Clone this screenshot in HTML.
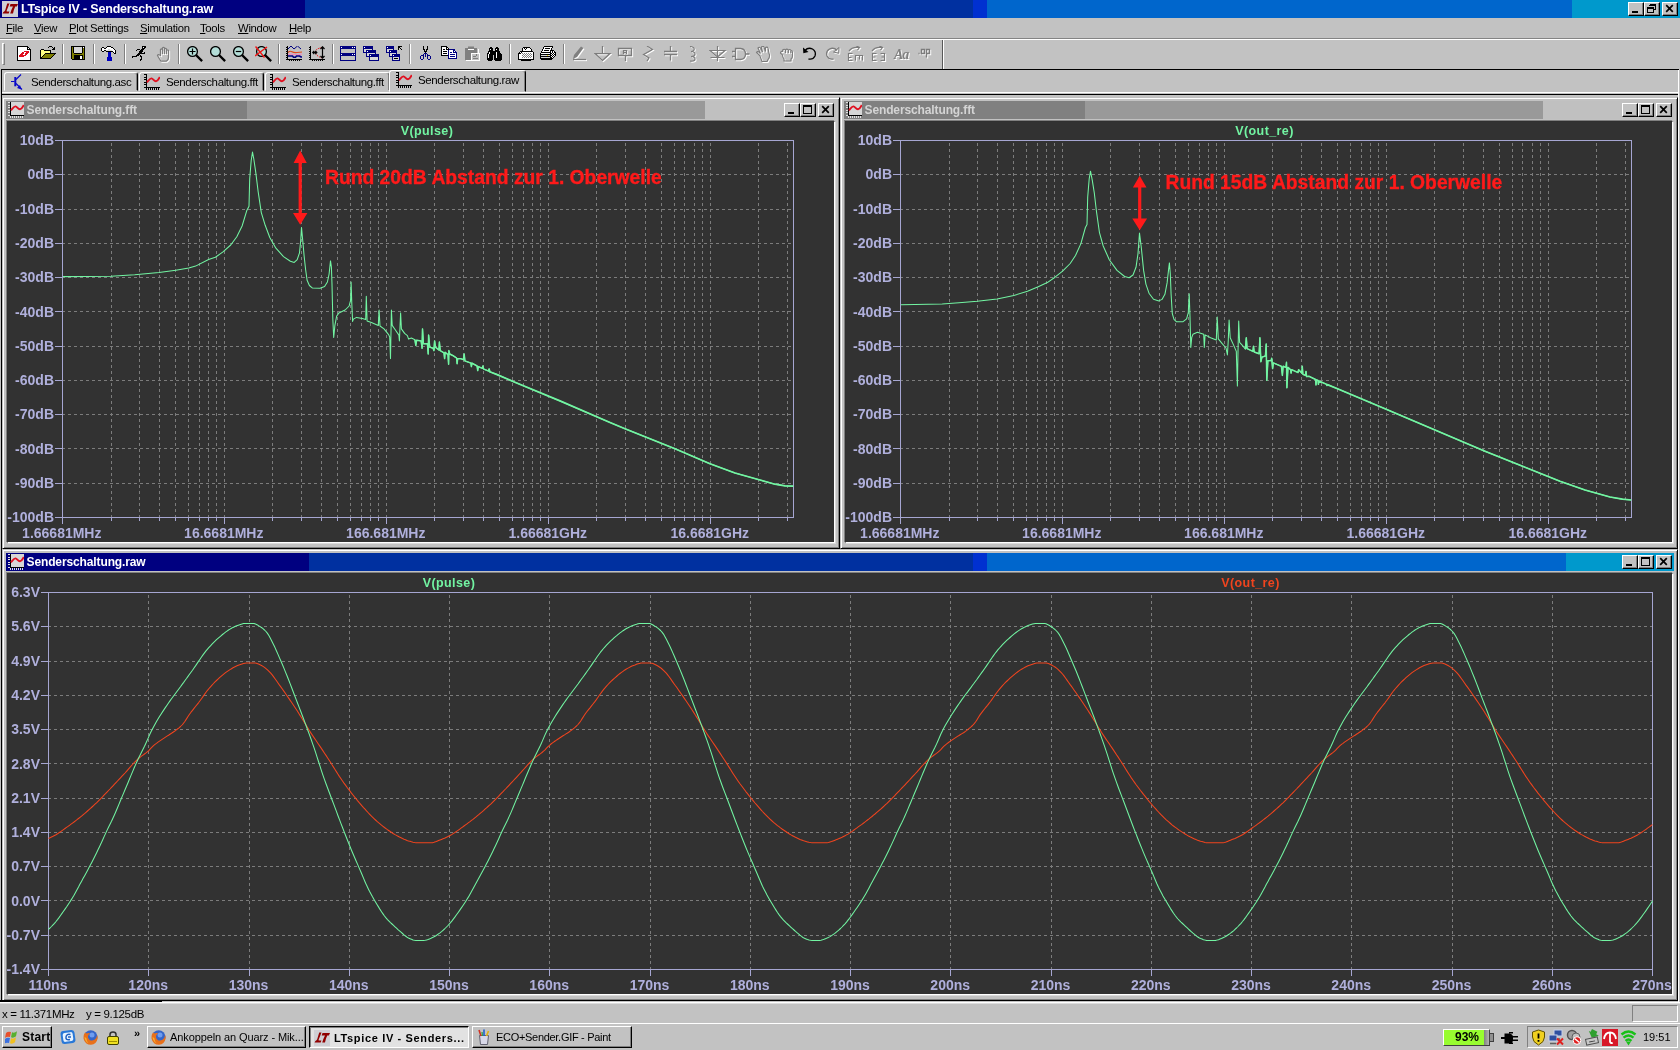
<!DOCTYPE html>
<html><head><meta charset="utf-8"><title>LTspice IV - Senderschaltung.raw</title>
<style>
*{box-sizing:border-box;margin:0;padding:0}
html,body{width:1680px;height:1050px;overflow:hidden;background:#c2c2c2;font-family:"Liberation Sans",sans-serif;font-size:11px;color:#000}
.a{position:absolute}
.t{position:absolute;white-space:nowrap;line-height:1}
.btn{position:absolute;background:#c2c2c2;border:1px solid;border-color:#fff #000 #000 #fff;box-shadow:inset -1px -1px 0 #808080}
.win{position:absolute;background:#c2c2c2;border:1px solid;border-color:#c2c2c2 #000 #000 #c2c2c2;box-shadow:inset 1px 1px 0 #fff,inset -1px -1px 0 #808080}
.cl{position:absolute;background:#323232;border:1px solid;border-color:#303030 #fff #fff #303030;box-shadow:-1px -1px 0 #808080,1px 1px 0 #dadada}
.cap{position:absolute;height:18px;color:#fff;font-weight:bold;font-size:12px}
.cap .t{top:3px}
u{text-decoration:underline}
svg{position:absolute;left:0;top:0}
svg text{font-family:"Liberation Sans",sans-serif;font-weight:bold}
</style></head><body><div id="root" style="position:absolute;left:0;top:0;width:1680px;height:1050px;will-change:transform">

<div class="a" style="left:0;top:0;width:1680px;height:18px;background:linear-gradient(90deg,#000080 0,#000080 305px,#0030a0 305px,#0030a0 973px,#0030d0 973px,#0030d0 987px,#0066cc 987px,#0066cc 1572px,#0099cc 1572px)"></div>
<svg class="a" style="left:2px;top:1px" width="16" height="16" viewBox="0 0 16 16" ><rect width="16" height="16" fill="#cfcfd4"/><path fill="#900000" d="M5.200 2.400h2.300L4.700 9.400q-.4 1.200.8 1.200h1.900l-.7 2H.6l.8-1.700q1.300-.3 1.800-1.700z"/><path fill="#900000" d="M8.500 2.900H16l-1.200 2.700h-1.600q-1.500 3.400-2.200 7H8.200q1.100-3.800 2.800-7H7.700z"/></svg>
<div class="t" style="left:21px;top:3.200px;color:#fff;font-weight:bold;font-size:12.500px;letter-spacing:-.19px" id="mt">LTspice IV - Senderschaltung.raw</div>
<div class="btn" style="left:1628px;top:2px;width:16px;height:14px"><svg class="a" style="left:-1px;top:-1px" width="16" height="14" viewBox="0 0 16 14" shape-rendering="crispEdges" ><path stroke="#000" stroke-width="2" d="M4 10h6"/></svg></div>
<div class="btn" style="left:1644px;top:2px;width:16px;height:14px"><svg class="a" style="left:-1px;top:-1px" width="16" height="14" viewBox="0 0 16 14" shape-rendering="crispEdges" ><path fill="none" stroke="#000" d="M5.5 2.5h6v5h-2M3.5 5.5h6v5h-6z"/><path stroke="#000" d="M5 3.5h7M3 6.5h7"/></svg></div>
<div class="btn" style="left:1662px;top:2px;width:16px;height:14px"><svg class="a" style="left:-1px;top:-1px" width="16" height="14" viewBox="0 0 16 14" ><path fill="none" stroke="#000" stroke-width="1.7" d="M4.2 3.2l6.6 6.6M10.8 3.2l-6.6 6.6"/></svg></div>
<div class="t" style="left:6px;top:22.500px;font-size:11.300px;letter-spacing:-.3px"><u>F</u>ile</div>
<div class="t" style="left:34px;top:22.500px;font-size:11.300px;letter-spacing:-.3px"><u>V</u>iew</div>
<div class="t" style="left:69px;top:22.500px;font-size:11.300px;letter-spacing:-.3px"><u>P</u>lot Settings</div>
<div class="t" style="left:140px;top:22.500px;font-size:11.300px;letter-spacing:-.3px"><u>S</u>imulation</div>
<div class="t" style="left:200px;top:22.500px;font-size:11.300px;letter-spacing:-.3px"><u>T</u>ools</div>
<div class="t" style="left:238px;top:22.500px;font-size:11.300px;letter-spacing:-.3px"><u>W</u>indow</div>
<div class="t" style="left:289px;top:22.500px;font-size:11.300px;letter-spacing:-.3px"><u>H</u>elp</div>
<div class="a" style="left:0;top:38px;width:1680px;height:1px;background:#848484"></div>
<div class="a" style="left:0;top:39px;width:1680px;height:1px;background:#fff"></div>
<div class="a" style="left:2px;top:43px;width:3px;height:22px;border:1px solid;border-color:#fff #808080 #808080 #fff"></div>
<div class="a" style="left:62px;top:44px;width:1px;height:20px;background:#808080"></div><div class="a" style="left:63px;top:44px;width:1px;height:20px;background:#fff"></div><div class="a" style="left:93px;top:44px;width:1px;height:20px;background:#808080"></div><div class="a" style="left:94px;top:44px;width:1px;height:20px;background:#fff"></div><div class="a" style="left:124px;top:44px;width:1px;height:20px;background:#808080"></div><div class="a" style="left:125px;top:44px;width:1px;height:20px;background:#fff"></div><div class="a" style="left:178px;top:44px;width:1px;height:20px;background:#808080"></div><div class="a" style="left:179px;top:44px;width:1px;height:20px;background:#fff"></div><div class="a" style="left:278px;top:44px;width:1px;height:20px;background:#808080"></div><div class="a" style="left:279px;top:44px;width:1px;height:20px;background:#fff"></div><div class="a" style="left:332px;top:44px;width:1px;height:20px;background:#808080"></div><div class="a" style="left:333px;top:44px;width:1px;height:20px;background:#fff"></div><div class="a" style="left:409px;top:44px;width:1px;height:20px;background:#808080"></div><div class="a" style="left:410px;top:44px;width:1px;height:20px;background:#fff"></div><div class="a" style="left:509px;top:44px;width:1px;height:20px;background:#808080"></div><div class="a" style="left:510px;top:44px;width:1px;height:20px;background:#fff"></div><div class="a" style="left:563px;top:44px;width:1px;height:20px;background:#808080"></div><div class="a" style="left:564px;top:44px;width:1px;height:20px;background:#fff"></div><svg class="a" style="left:17px;top:46px" width="14" height="15" viewBox="0 0 14 15" shape-rendering="crispEdges" ><path stroke="#000" d="M0 0.5h11M0 1.5h1M10 1.5h2M0 2.5h1M10 2.5h1M12 2.5h1M0 3.5h1M10 3.5h4M0 4.5h1M13 4.5h1M0 5.5h1M13 5.5h1M0 6.5h1M13 6.5h1M0 7.5h1M13 7.5h1M0 8.5h1M13 8.5h1M0 9.5h1M13 9.5h1M0 10.5h1M13 10.5h1M0 11.5h1M13 11.5h1M0 12.5h1M13 12.5h1M0 13.5h1M13 13.5h1M0 14.5h14"/><path stroke="#fff" d="M1 1.5h9M1 2.5h9M11 2.5h1M1 3.5h9M1 4.5h12M1 5.5h6M12 5.5h1M1 6.5h4M7 6.5h2M12 6.5h1M1 7.5h3M7 7.5h1M11 7.5h2M1 8.5h2M6 8.5h2M10 8.5h3M1 9.5h1M9 9.5h4M1 10.5h1M7 10.5h6M1 11.5h12M1 12.5h12M1 13.5h12"/><path stroke="#e01020" d="M7 5.5h5M5 6.5h2M9 6.5h3M4 7.5h3M8 7.5h3M3 8.5h3M8 8.5h2M2 9.5h7M2 10.5h5"/></svg><svg class="a" style="left:40px;top:46px" width="16" height="13" viewBox="0 0 16 13" shape-rendering="crispEdges" ><path stroke="#000" d="M9 0.5h3M8 1.5h1M12 1.5h1M14 1.5h1M13 2.5h2M1 3.5h3M12 3.5h3M0 4.5h1M4 4.5h7M0 5.5h1M10 5.5h1M0 6.5h1M10 6.5h1M0 7.5h1M5 7.5h11M0 8.5h1M4 8.5h1M14 8.5h1M0 9.5h1M3 9.5h1M13 9.5h1M0 10.5h1M2 10.5h1M12 10.5h1M0 11.5h2M11 11.5h1M0 12.5h11"/><path stroke="#ffff80" d="M1 4.5h3M1 5.5h9M1 6.5h9M1 7.5h4M1 8.5h3M1 9.5h2M1 10.5h1"/><path stroke="#808000" d="M5 8.5h9M4 9.5h9M3 10.5h9M2 11.5h9"/></svg><svg class="a" style="left:71px;top:46px" width="14" height="14" viewBox="0 0 14 14" shape-rendering="crispEdges" ><path stroke="#000" d="M0 0.5h14M0 1.5h1M2 1.5h1M11 1.5h1M13 1.5h1M0 2.5h1M2 2.5h1M11 2.5h1M13 2.5h1M0 3.5h1M2 3.5h1M11 3.5h1M13 3.5h1M0 4.5h1M2 4.5h1M11 4.5h1M13 4.5h1M0 5.5h1M2 5.5h1M11 5.5h1M13 5.5h1M0 6.5h1M2 6.5h1M11 6.5h1M13 6.5h1M0 7.5h1M3 7.5h8M13 7.5h1M0 8.5h1M13 8.5h1M0 9.5h1M3 9.5h9M13 9.5h1M0 10.5h1M3 10.5h6M11 10.5h1M13 10.5h1M0 11.5h1M3 11.5h6M11 11.5h1M13 11.5h1M0 12.5h1M3 12.5h6M11 12.5h1M13 12.5h1M1 13.5h13"/><path stroke="#808000" d="M1 1.5h1M1 2.5h1M12 2.5h1M1 3.5h1M12 3.5h1M1 4.5h1M12 4.5h1M1 5.5h1M12 5.5h1M1 6.5h1M12 6.5h1M1 7.5h2M11 7.5h2M1 8.5h12M1 9.5h2M12 9.5h1M1 10.5h2M12 10.5h1M1 11.5h2M12 11.5h1M1 12.5h2M12 12.5h1"/><path stroke="#d8d8d8" d="M3 1.5h8M3 2.5h8M3 3.5h8M3 4.5h8M3 5.5h8M3 6.5h8"/><path stroke="#fff" d="M12 1.5h1M9 10.5h2M9 11.5h2M9 12.5h2"/></svg><svg class="a" style="left:101px;top:46px" width="16" height="15" viewBox="0 0 16 15" shape-rendering="crispEdges" ><path stroke="#000" d="M6 0.5h4M1 1.5h2M5 1.5h1M10 1.5h2M0 2.5h1M3 2.5h2M12 2.5h1M0 3.5h1M13 3.5h1M0 4.5h1M3 4.5h2M14 4.5h1M1 5.5h2M5 5.5h7M14 5.5h1M12 6.5h1M14 6.5h1M13 7.5h2"/><path stroke="#fff" d="M6 1.5h4M1 2.5h2M5 2.5h7M1 3.5h6M9 3.5h4M1 4.5h2M11 4.5h3M12 5.5h2M13 6.5h1"/><path stroke="#d8d8d8" d="M7 3.5h2M5 4.5h6"/><path stroke="#0000c0" d="M7 6.5h3M7 7.5h3M7 8.5h3M7 9.5h3M7 10.5h3M6 11.5h5M6 12.5h5M6 13.5h5M6 14.5h5"/></svg><svg class="a" style="left:132px;top:46px" width="15" height="15" viewBox="0 0 15 15" shape-rendering="crispEdges" ><path stroke="#000" d="M10 0.5h4M10 1.5h1M12 1.5h2M10 2.5h3M5 3.5h3M9 3.5h3M4 4.5h1M8 4.5h3M7 5.5h4M7 6.5h3M12 6.5h1M6 7.5h7M5 8.5h3M4 9.5h3M8 9.5h1M0 10.5h5M8 10.5h2M0 11.5h1M9 11.5h1M9 12.5h1M8 13.5h2M8 14.5h1"/><path stroke="#fff" d="M11 1.5h1"/></svg><svg class="a" style="left:156px;top:46px" width="17" height="17" viewBox="0 0 17 17" ><g transform="translate(1,1)" stroke="#fff" fill="none" stroke-width="1.250"><path d="M4.5 9.5V3.5q1-1.2 2 0V2q1-1.2 2 0v1q1-1.2 2 0v1.5q1-1.2 2 0v7q0 2.500-2 3.500h-5.500q-1-1-3.500-5.500q.7-1.300 2-.5z"/><path d="M6.500 3.500v4.500M8.500 3v5M10.500 4.500v3.500"/></g><g stroke="#7c7c7c" fill="none" stroke-width="1.250"><path d="M4.5 9.5V3.5q1-1.2 2 0V2q1-1.2 2 0v1q1-1.2 2 0v1.5q1-1.2 2 0v7q0 2.500-2 3.500h-5.500q-1-1-3.500-5.500q.7-1.300 2-.5z"/><path d="M6.500 3.500v4.500M8.500 3v5M10.500 4.500v3.500"/></g></svg><svg class="a" style="left:187px;top:46px" width="16" height="16" viewBox="0 0 16 16" ><circle cx="5.5" cy="5.5" r="4.9" fill="#b4ded8" stroke="#000" stroke-width="1.3"/><path stroke="#000" stroke-width="2.3" stroke-linecap="square" d="M10 10l4.3 4.3"/><path stroke="#000" stroke-width="1.2" d="M2.500 5.500h6M5.500 2.500v6"/></svg><svg class="a" style="left:210px;top:46px" width="16" height="16" viewBox="0 0 16 16" ><circle cx="5.5" cy="5.5" r="4.9" fill="#b4ded8" stroke="#000" stroke-width="1.3"/><path stroke="#000" stroke-width="2.3" stroke-linecap="square" d="M10 10l4.3 4.3"/></svg><svg class="a" style="left:233px;top:46px" width="16" height="16" viewBox="0 0 16 16" ><circle cx="5.5" cy="5.5" r="4.9" fill="#b4ded8" stroke="#000" stroke-width="1.3"/><path stroke="#000" stroke-width="2.3" stroke-linecap="square" d="M10 10l4.3 4.3"/><path stroke="#000" stroke-width="1.200" d="M2.800 5.500h5.400"/></svg><svg class="a" style="left:255px;top:46px" width="17" height="16" viewBox="0 0 17 16" ><g transform="translate(1,0)"><circle cx="5.5" cy="5.5" r="4.9" fill="#b4ded8" stroke="#000" stroke-width="1.3"/><path stroke="#000" stroke-width="2.3" stroke-linecap="square" d="M10 10l4.3 4.3"/></g><path stroke="#f01818" stroke-width="1.500" d="M.5 .5l9 11M12 1L0 10"/></svg><svg class="a" style="left:286px;top:46px" width="16" height="16" viewBox="0 0 16 16" ><path stroke="#000" d="M1.500 0v13.500M0 13.500h16"/><path stroke="#000" d="M0 1.500h1M0 3.500h1M0 5.500h1M0 7.500h1M0 9.500h1M0 11.500h1M3.500 14v1M5.500 14v1M7.500 14v1M9.500 14v1M11.500 14v1M13.500 14v1" /><path fill="none" stroke="#000080" d="M2 3l3-3l3 3l3.500-3l3.500 3"/><path fill="none" stroke="#e04818" stroke-width="1.200" d="M2 6.500q2-2 4-.8t5 .8t5-.5"/><path fill="none" stroke="#ff80c0" d="M2 8.500q3-1 6 0t8-.5"/><path fill="none" stroke="#000080" stroke-width="1.600" d="M2 10h4.500l1 1.300h2l1-1.300h3l1.500 1h1"/></svg><svg class="a" style="left:309px;top:46px" width="16" height="16" viewBox="0 0 16 16" ><path stroke="#000" d="M1.500 0v13.500M0 13.500h16"/><path stroke="#000" d="M0 1.500h1M0 3.500h1M0 5.500h1M0 7.500h1M0 9.500h1M0 11.500h1M3.500 14v1M5.500 14v1M7.500 14v1M9.500 14v1M11.500 14v1M13.500 14v1" /><path fill="none" stroke="#e02020" stroke-dasharray="1.500 1" d="M13 1.500C4 3 4 9 13 12"/><path stroke="#000" stroke-width="1.200" fill="none" d="M13.500 1v11M11.500 3l2-2.200l2 2.200M11.500 10l2 2.200l2-2.200M4 6.500h3.500M5.300 5L3.800 6.500L5.300 8M6.300 5l1.500 1.500L6.300 8"/></svg><svg class="a" style="left:340px;top:46px" width="16" height="15" viewBox="0 0 16 15" shape-rendering="crispEdges" ><path stroke="#000080" d="M0 0.5h16M0 1.5h1M2 1.5h10M13 1.5h1M15 1.5h1M0 2.5h16M0 3.5h1M15 3.5h1M0 4.5h1M15 4.5h1M0 5.5h1M15 5.5h1M0 6.5h1M15 6.5h1M0 7.5h16M0 8.5h1M2 8.5h10M13 8.5h1M15 8.5h1M0 9.5h16M0 10.5h1M15 10.5h1M0 11.5h1M15 11.5h1M0 12.5h1M15 12.5h1M0 13.5h1M15 13.5h1M0 14.5h16"/><path stroke="#fff" d="M1 1.5h1M12 1.5h1M14 1.5h1M1 8.5h1M12 8.5h1M14 8.5h1"/></svg><svg class="a" style="left:363px;top:46px" width="16" height="15" viewBox="0 0 16 15" shape-rendering="crispEdges" ><path stroke="#000080" d="M0 0.5h10M0 1.5h1M2 1.5h8M0 2.5h10M0 3.5h1M9 3.5h1M0 4.5h1M3 4.5h10M0 5.5h1M3 5.5h1M5 5.5h8M0 6.5h13M3 7.5h1M12 7.5h1M3 8.5h1M6 8.5h10M3 9.5h1M6 9.5h1M8 9.5h8M3 10.5h13M6 11.5h1M15 11.5h1M6 12.5h1M15 12.5h1M6 13.5h1M15 13.5h1M6 14.5h10"/><path stroke="#fff" d="M1 1.5h1M4 5.5h1M7 9.5h1"/><path stroke="#d8d8d8" d="M1 3.5h8M1 4.5h2M1 5.5h2M4 7.5h8M4 8.5h2M4 9.5h2M7 11.5h8M7 12.5h8M7 13.5h8"/></svg><svg class="a" style="left:386px;top:46px" width="16" height="15" viewBox="0 0 16 15" shape-rendering="crispEdges" ><path stroke="#000080" d="M0 0.5h8M0 1.5h1M2 1.5h6M0 2.5h8M0 3.5h1M7 3.5h1M0 4.5h1M3 4.5h8M0 5.5h1M3 5.5h1M5 5.5h6M0 6.5h11M3 7.5h1M10 7.5h1M3 8.5h1M6 8.5h8M3 9.5h1M6 9.5h1M8 9.5h6M3 10.5h11M6 11.5h1M13 11.5h1M6 12.5h1M13 12.5h1M6 13.5h1M13 13.5h1M6 14.5h8"/><path stroke="#000" d="M12 0.5h4M12 1.5h2M12 2.5h1M14 2.5h1M12 3.5h1M15 3.5h1M8 12.5h4"/><path stroke="#fff" d="M1 1.5h1M4 5.5h1M7 9.5h1"/><path stroke="#d8d8d8" d="M1 3.5h6M1 4.5h2M1 5.5h2M4 7.5h6M4 8.5h2M4 9.5h2M7 11.5h6M7 12.5h1M12 12.5h1M7 13.5h6"/></svg><svg class="a" style="left:420px;top:46px" width="11" height="14" viewBox="0 0 11 14" shape-rendering="crispEdges" ><path stroke="#000" d="M3 0.5h1M7 0.5h1M3 1.5h1M7 1.5h1M3 2.5h1M7 2.5h1M3 3.5h2M6 3.5h2M4 4.5h1M6 4.5h1M4 5.5h3M5 6.5h1"/><path stroke="#000080" d="M4 7.5h3M3 8.5h1M5 8.5h1M7 8.5h1M1 9.5h3M5 9.5h1M7 9.5h3M0 10.5h1M3 10.5h1M5 10.5h1M7 10.5h1M10 10.5h1M0 11.5h1M3 11.5h1M7 11.5h1M10 11.5h1M0 12.5h1M3 12.5h1M7 12.5h1M10 12.5h1M1 13.5h2M8 13.5h2"/></svg><svg class="a" style="left:441px;top:46px" width="16" height="13" viewBox="0 0 16 13" shape-rendering="crispEdges" ><path stroke="#000" d="M0 0.5h6M0 1.5h1M5 1.5h2M0 2.5h1M5 2.5h1M7 2.5h1M0 3.5h1M2 3.5h2M5 3.5h3M0 4.5h1M0 5.5h1M2 5.5h4M0 6.5h1M0 7.5h1M2 7.5h4M0 8.5h1M0 9.5h7"/><path stroke="#fff" d="M1 1.5h4M1 2.5h4M6 2.5h1M1 3.5h1M4 3.5h1M1 4.5h6M8 4.5h4M1 5.5h1M6 5.5h1M8 5.5h4M13 5.5h1M1 6.5h6M8 6.5h1M11 6.5h1M1 7.5h1M6 7.5h1M8 7.5h7M1 8.5h6M8 8.5h1M14 8.5h1M8 9.5h7M8 10.5h1M14 10.5h1M8 11.5h7"/><path stroke="#000080" d="M8 3.5h6M7 4.5h1M12 4.5h2M7 5.5h1M12 5.5h1M14 5.5h1M7 6.5h1M9 6.5h2M12 6.5h4M7 7.5h1M15 7.5h1M7 8.5h1M9 8.5h5M15 8.5h1M7 9.5h1M15 9.5h1M7 10.5h1M9 10.5h5M15 10.5h1M7 11.5h1M15 11.5h1M7 12.5h9"/></svg><svg class="a" style="left:464px;top:46px" width="17" height="16" viewBox="0 0 17 16" ><rect x="1" y="2" width="12" height="12" fill="#808080"/><rect x="4" y=".5" width="6" height="3" fill="#808080"/><path stroke="#fff" d="M4 3.500h6M2 14.500h5M14.500 3v5"/><rect x="7.500" y="7.500" width="8" height="7" fill="#c2c2c2" stroke="#fff"/><path stroke="#808080" d="M9 10.500h3M9 12.500h5M12.500 8v2"/></svg><svg class="a" style="left:487px;top:47px" width="15" height="14" viewBox="0 0 15 14" shape-rendering="crispEdges" ><path stroke="#000" d="M3 0.5h2M9 0.5h2M2 1.5h4M8 1.5h4M2 2.5h1M4 2.5h2M8 2.5h1M10 2.5h2M2 3.5h4M8 3.5h4M1 4.5h12M1 5.5h1M3 5.5h6M10 5.5h3M0 6.5h2M3 6.5h6M10 6.5h4M0 7.5h1M2 7.5h7M10 7.5h5M0 8.5h1M2 8.5h4M7 8.5h2M10 8.5h5M0 9.5h1M2 9.5h4M7 9.5h2M10 9.5h5M0 10.5h1M2 10.5h4M7 10.5h2M10 10.5h5M0 11.5h6M7 11.5h8M0 12.5h6M7 12.5h8M1 13.5h4M8 13.5h6"/><path stroke="#fff" d="M3 2.5h1M9 2.5h1M2 5.5h1M9 5.5h1M2 6.5h1M9 6.5h1M1 7.5h1M9 7.5h1M1 8.5h1M9 8.5h1M1 9.5h1M9 9.5h1M1 10.5h1M9 10.5h1"/></svg><svg class="a" style="left:518px;top:47px" width="16" height="14" viewBox="0 0 16 14" shape-rendering="crispEdges" ><path stroke="#000" d="M5 0.5h7M4 1.5h1M6 1.5h1M8 1.5h1M12 1.5h1M4 2.5h1M7 2.5h1M13 2.5h1M4 3.5h1M13 3.5h1M2 4.5h13M1 5.5h1M3 5.5h1M15 5.5h1M0 6.5h3M15 6.5h1M0 7.5h1M15 7.5h1M0 8.5h1M15 8.5h1M0 9.5h1M15 9.5h1M0 10.5h1M15 10.5h1M0 11.5h1M15 11.5h1M0 12.5h16M3 13.5h10"/><path stroke="#fff" d="M5 1.5h1M7 1.5h1M9 1.5h3M5 2.5h2M8 2.5h5M5 3.5h8M2 5.5h1M4 5.5h11M3 6.5h1M5 6.5h1M7 6.5h1M9 6.5h1M11 6.5h1M13 6.5h2M1 7.5h4M6 7.5h1M8 7.5h1M10 7.5h1M12 7.5h1M14 7.5h1M1 8.5h3M5 8.5h1M7 8.5h1M9 8.5h1M11 8.5h1M13 8.5h2M1 9.5h4M6 9.5h1M8 9.5h1M10 9.5h1M12 9.5h1M14 9.5h1M1 10.5h3M5 10.5h1M7 10.5h1M9 10.5h1M11 10.5h1M13 10.5h2M1 11.5h14"/><path stroke="#808080" d="M4 6.5h1M6 6.5h1M8 6.5h1M10 6.5h1M12 6.5h1M5 7.5h1M7 7.5h1M9 7.5h1M11 7.5h1M13 7.5h1M4 8.5h1M6 8.5h1M8 8.5h1M10 8.5h1M12 8.5h1M5 9.5h1M7 9.5h1M9 9.5h1M11 9.5h1M13 9.5h1M4 10.5h1M6 10.5h1M8 10.5h1M10 10.5h1M12 10.5h1"/></svg><svg class="a" style="left:540px;top:46px" width="16" height="14" viewBox="0 0 16 14" shape-rendering="crispEdges" ><path stroke="#000" d="M4 0.5h9M3 1.5h1M12 1.5h1M3 2.5h1M5 2.5h5M11 2.5h1M2 3.5h1M11 3.5h1M2 4.5h1M4 4.5h5M10 4.5h4M1 5.5h1M10 5.5h1M12 5.5h1M14 5.5h1M1 6.5h10M12 6.5h1M14 6.5h2M0 7.5h1M10 7.5h2M13 7.5h1M15 7.5h1M0 8.5h11M12 8.5h1M14 8.5h2M0 9.5h1M10 9.5h2M13 9.5h1M15 9.5h1M0 10.5h11M12 10.5h1M14 10.5h1M0 11.5h1M10 11.5h2M13 11.5h1M0 12.5h13M1 13.5h11"/><path stroke="#fff" d="M4 1.5h8M4 2.5h1M10 2.5h1M3 3.5h8M3 4.5h1M9 4.5h1M2 5.5h8M11 5.5h1M13 5.5h1M11 6.5h1M13 6.5h1M1 7.5h9M12 7.5h1M14 7.5h1M11 8.5h1M13 8.5h1M12 9.5h1M14 9.5h1M11 10.5h1M13 10.5h1M12 11.5h1"/><path stroke="#d8d8d8" d="M1 9.5h6M8 9.5h2M1 11.5h9"/><path stroke="#ffe000" d="M7 9.5h1"/></svg><svg class="a" style="left:571px;top:46px" width="18" height="17" viewBox="0 0 18 17" ><g transform="translate(1,1)" stroke="#fff" fill="#fff"><path d="M2 13l1-4l7-8.500l2.500 1.500l-6.500 9z" stroke="none"/></g><g stroke="#808080" fill="#808080"><path d="M2 13l1-4l7-8.500l2.500 1.500l-6.500 9z" stroke="none"/></g><g transform="translate(1,1)" stroke="#fff" fill="none" stroke-width="1.250"><path d="M2 13.500h13"/></g><g stroke="#7c7c7c" fill="none" stroke-width="1.250"><path d="M2 13.500h13"/></g></svg><svg class="a" style="left:594px;top:46px" width="18" height="17" viewBox="0 0 18 17" ><g transform="translate(1,1)" stroke="#fff" fill="none" stroke-width="1.250"><path d="M8.500 0v7M1 7.500h15l-7.500 7z"/></g><g stroke="#7c7c7c" fill="none" stroke-width="1.250"><path d="M8.500 0v7M1 7.500h15l-7.500 7z"/></g></svg><svg class="a" style="left:617px;top:46px" width="18" height="17" viewBox="0 0 18 17" ><g transform="translate(1,1)" stroke="#fff" fill="none" stroke-width="1.250"><path d="M1.500 2.500h13v7h-13zM8.500 10v5" stroke-width="1.300"/><path d="M6.500 8V4.500h3V8M6.500 6.500h3"/></g><g stroke="#7c7c7c" fill="none" stroke-width="1.250"><path d="M1.500 2.500h13v7h-13zM8.500 10v5" stroke-width="1.300"/><path d="M6.500 8V4.500h3V8M6.500 6.500h3"/></g></svg><svg class="a" style="left:641px;top:46px" width="18" height="17" viewBox="0 0 18 17" ><g transform="translate(1,1)" stroke="#fff" fill="none" stroke-width="1.250"><path d="M6 0l5.500 3.500L2.500 8.500L8 12l-2 3" stroke-width="1.200"/></g><g stroke="#7c7c7c" fill="none" stroke-width="1.250"><path d="M6 0l5.500 3.500L2.500 8.500L8 12l-2 3" stroke-width="1.200"/></g></svg><svg class="a" style="left:664px;top:46px" width="18" height="17" viewBox="0 0 18 17" ><g transform="translate(1,1)" stroke="#fff" fill="none" stroke-width="1.250"><path d="M6.500 0v5.500M0 5.500h13M0 8.500h13M6.500 8.500v6" stroke-width="1.300"/></g><g stroke="#7c7c7c" fill="none" stroke-width="1.250"><path d="M6.500 0v5.500M0 5.500h13M0 8.500h13M6.500 8.500v6" stroke-width="1.300"/></g></svg><svg class="a" style="left:687px;top:46px" width="18" height="17" viewBox="0 0 18 17" ><g transform="translate(1,1)" stroke="#fff" fill="none" stroke-width="1.250"><path d="M3 .5q5 .5 4 3.500q-1 1.500-3 1.500q4 0 4 2.500t-4 2.500q4 0 4 2.500t-5 2" stroke-width="1.200"/></g><g stroke="#7c7c7c" fill="none" stroke-width="1.250"><path d="M3 .5q5 .5 4 3.500q-1 1.500-3 1.500q4 0 4 2.500t-4 2.500q4 0 4 2.500t-5 2" stroke-width="1.200"/></g></svg><svg class="a" style="left:709px;top:46px" width="18" height="17" viewBox="0 0 18 17" ><g transform="translate(1,1)" stroke="#fff" fill="none" stroke-width="1.250"><path d="M8.500 0v15M1 4.500h15l-7.500 6.500zM1.500 11.500h14" stroke-width="1.200"/></g><g stroke="#7c7c7c" fill="none" stroke-width="1.250"><path d="M8.500 0v15M1 4.500h15l-7.500 6.500zM1.500 11.500h14" stroke-width="1.200"/></g></svg><svg class="a" style="left:732px;top:46px" width="18" height="17" viewBox="0 0 18 17" ><g transform="translate(1,1)" stroke="#fff" fill="none" stroke-width="1.250"><path d="M0 5.500h3.500M0 10.500h3.500M3.500 2.500h5q5 .5 5 5.500t-5 5.500h-5zM13.500 8h4" stroke-width="1.300"/></g><g stroke="#7c7c7c" fill="none" stroke-width="1.250"><path d="M0 5.500h3.500M0 10.500h3.500M3.500 2.500h5q5 .5 5 5.500t-5 5.500h-5zM13.500 8h4" stroke-width="1.300"/></g></svg><svg class="a" style="left:755px;top:46px" width="18" height="17" viewBox="0 0 18 17" ><g transform="translate(1,1)" stroke="#fff" fill="none" stroke-width="1.250"><path d="M5 10L1.500 6.500q1-1.500 2.500-.5l1.500 1.500L3 2q1.500-1.500 2.500 0l2 4L6.500 1q1.500-1.500 2.500 0l1.500 4.500L10.500 1.500q1.500-1 2.500 .5l1 5.500q1.500 3-1 6l-1 2H7z" stroke-width="1.100"/></g><g stroke="#7c7c7c" fill="none" stroke-width="1.250"><path d="M5 10L1.500 6.500q1-1.500 2.500-.5l1.500 1.500L3 2q1.500-1.500 2.500 0l2 4L6.500 1q1.500-1.500 2.500 0l1.500 4.500L10.500 1.500q1.500-1 2.500 .5l1 5.500q1.500 3-1 6l-1 2H7z" stroke-width="1.100"/></g></svg><svg class="a" style="left:779px;top:46px" width="18" height="17" viewBox="0 0 18 17" ><g transform="translate(1,1)" stroke="#fff" fill="none" stroke-width="1.250"><path d="M3.500 9L1.500 7q0-2 2.200-1.500V4q1.500-1.500 2.800 0q1.200-1.800 2.800 0q1.500-1.200 2.600 .3q1.500 .2 1.600 1.700v4q0 2-1.500 3v2h-7v-2q-1.500-1.500-1.500-4z" stroke-width="1.100"/><path d="M6.500 4v3M9.300 4v3M11.900 4.500v2.500"/></g><g stroke="#7c7c7c" fill="none" stroke-width="1.250"><path d="M3.500 9L1.500 7q0-2 2.200-1.500V4q1.500-1.500 2.800 0q1.200-1.800 2.800 0q1.500-1.200 2.600 .3q1.500 .2 1.600 1.700v4q0 2-1.500 3v2h-7v-2q-1.500-1.500-1.500-4z" stroke-width="1.100"/><path d="M6.500 4v3M9.300 4v3M11.900 4.500v2.500"/></g></svg><svg class="a" style="left:802px;top:46px" width="16" height="16" viewBox="0 0 16 16" ><path fill="none" stroke="#000" stroke-width="1.300" d="M3 4.500q3-3.500 7.500-1.500q4 2.500 2.500 7q-2 4-6.500 3"/><path fill="#000" d="M1 1.500l.3 5.800l5.200-1.300z"/></svg><svg class="a" style="left:825px;top:46px" width="18" height="17" viewBox="0 0 18 17" ><g transform="translate(1,1)" stroke="#fff" fill="none" stroke-width="1.250"><path d="M12 4.500q-3-3.500-7.500-1.500q-4 2.500-2.500 7q2 4 6.500 3" stroke-width="1.300"/><path d="M14 1.500l-.3 5.800l-5.200-1.300z" stroke-width="1"/></g><g stroke="#7c7c7c" fill="none" stroke-width="1.250"><path d="M12 4.500q-3-3.500-7.500-1.500q-4 2.500-2.500 7q2 4 6.500 3" stroke-width="1.300"/><path d="M14 1.500l-.3 5.800l-5.200-1.300z" stroke-width="1"/></g></svg><svg class="a" style="left:847px;top:46px" width="18" height="17" viewBox="0 0 18 17" ><g transform="translate(1,1)" stroke="#fff" fill="none" stroke-width="1.250"><path d="M2 5q3-4.500 10-3.500M9.500 0l3 1.500l-2 2.500M1.500 7v8M1.500 7.500h4M1.500 11.500h3M1.500 14.500h4M8 9.500h8M8.500 9.500v5M12.500 9.500v4M15.500 9.500v5" stroke-width="1.200"/></g><g stroke="#7c7c7c" fill="none" stroke-width="1.250"><path d="M2 5q3-4.500 10-3.500M9.500 0l3 1.500l-2 2.500M1.500 7v8M1.500 7.500h4M1.500 11.500h3M1.500 14.500h4M8 9.500h8M8.500 9.500v5M12.500 9.500v4M15.500 9.500v5" stroke-width="1.200"/></g></svg><svg class="a" style="left:870px;top:46px" width="18" height="17" viewBox="0 0 18 17" ><g transform="translate(1,1)" stroke="#fff" fill="none" stroke-width="1.250"><path d="M2 5q3-4.500 10-3.500M9.500 0l3 1.500l-2 2.500M2.500 7v8M2.500 7.500h4M2.500 11h3M2.500 14.500h4M14.500 7v8M14.500 7.500h-4M14.500 11h-3M14.500 14.500h-4" stroke-width="1.200"/></g><g stroke="#7c7c7c" fill="none" stroke-width="1.250"><path d="M2 5q3-4.500 10-3.500M9.500 0l3 1.500l-2 2.500M2.500 7v8M2.500 7.500h4M2.500 11h3M2.500 14.500h4M14.500 7v8M14.500 7.500h-4M14.500 11h-3M14.500 14.500h-4" stroke-width="1.200"/></g></svg><div class="t" style="left:895px;top:48px;font:italic bold 14px 'Liberation Serif',serif;color:#fff;letter-spacing:-1px">Aa</div><div class="t" style="left:894px;top:47px;font:italic bold 14px 'Liberation Serif',serif;color:#808080;letter-spacing:-1px">Aa</div><svg class="a" style="left:917px;top:46px" width="18" height="17" viewBox="0 0 18 17" ><g transform="translate(1,1)" stroke="#fff" fill="none" stroke-width="1.250"><path d="M1.500 7.500h1M4.500 3.500h3v4h-3zM9.500 3.500h3v4h-3zM9.500 7.500v4" stroke-width="1.400"/></g><g stroke="#7c7c7c" fill="none" stroke-width="1.250"><path d="M1.500 7.500h1M4.500 3.500h3v4h-3zM9.500 3.500h3v4h-3zM9.500 7.500v4" stroke-width="1.400"/></g></svg>
<div class="a" style="left:942px;top:40px;width:1px;height:29px;background:#585858"></div>
<div class="a" style="left:943px;top:40px;width:1px;height:29px;background:#fff"></div>
<div class="a" style="left:1px;top:69px;width:1678px;height:1px;background:#000"></div>
<div class="a" style="left:1px;top:69px;width:1px;height:26px;background:#000"></div><div class="a" style="left:4px;top:72px;width:134px;height:19px;background:#c2c2c2;border:1px solid;border-color:#fff #000 #c2c2c2 #fff;border-radius:3px 3px 0 0;box-shadow:inset -1px 0 0 #808080"></div><svg class="a" style="left:11px;top:74px" width="12" height="17" viewBox="0 0 12 17" ><path fill="none" stroke="#0808c8" stroke-width="1.200" d="M0 7.500h3.500M5 5.500L10 .5M5 9.500l6 6"/><path stroke="#0808c8" stroke-width="2" d="M4.300 3v9.300"/><path fill="#0808c8" d="M10.500 15.500l-4.500-1.500l3-3z"/></svg><div class="t" style="left:31px;top:77px;font-size:11.5px;letter-spacing:-.37px">Senderschaltung.asc</div><div class="a" style="left:139px;top:72px;width:125px;height:19px;background:#c2c2c2;border:1px solid;border-color:#fff #000 #c2c2c2 #fff;border-radius:3px 3px 0 0;box-shadow:inset -1px 0 0 #808080"></div><svg class="a" style="left:144px;top:74px" width="16" height="16" viewBox="0 0 16 16" ><g shape-rendering="crispEdges"><path stroke="#000" d="M2.500 0v14M2 13.500h14"/><path stroke="#000" d="M0 .500h2M0 3.500h2M0 5.500h2M0 8.500h2M0 10.500h2M0 13.500h2M2.500 14v2M4.500 14v2M6.500 14v2M8.500 14v2M10.500 14v2M12.500 14v2M14.500 14v2"/></g><path fill="none" stroke="#e01020" stroke-width="1.900" d="M3 8.300C5 6 6 4.200 7.500 4.400S10 7.400 12 7.300S14.500 5 15.800 3"/></svg><div class="t" style="left:166px;top:77px;font-size:11.5px;letter-spacing:-.37px">Senderschaltung.fft</div><div class="a" style="left:265px;top:72px;width:125px;height:19px;background:#c2c2c2;border:1px solid;border-color:#fff #000 #c2c2c2 #fff;border-radius:3px 3px 0 0;box-shadow:inset -1px 0 0 #808080"></div><svg class="a" style="left:270px;top:74px" width="16" height="16" viewBox="0 0 16 16" ><g shape-rendering="crispEdges"><path stroke="#000" d="M2.500 0v14M2 13.500h14"/><path stroke="#000" d="M0 .500h2M0 3.500h2M0 5.500h2M0 8.500h2M0 10.500h2M0 13.500h2M2.500 14v2M4.500 14v2M6.500 14v2M8.500 14v2M10.500 14v2M12.500 14v2M14.500 14v2"/></g><path fill="none" stroke="#e01020" stroke-width="1.900" d="M3 8.300C5 6 6 4.200 7.500 4.400S10 7.400 12 7.300S14.500 5 15.800 3"/></svg><div class="t" style="left:292px;top:77px;font-size:11.5px;letter-spacing:-.37px">Senderschaltung.fft</div><div class="a" style="left:389px;top:70px;width:137px;height:22px;background:#c2c2c2;border:1px solid;border-color:#fff #000 #c2c2c2 #fff;border-radius:3px 3px 0 0;box-shadow:inset -1px 0 0 #808080"></div><svg class="a" style="left:396px;top:72px" width="16" height="16" viewBox="0 0 16 16" ><g shape-rendering="crispEdges"><path stroke="#000" d="M2.500 0v14M2 13.500h14"/><path stroke="#000" d="M0 .500h2M0 3.500h2M0 5.500h2M0 8.500h2M0 10.500h2M0 13.500h2M2.500 14v2M4.500 14v2M6.500 14v2M8.500 14v2M10.500 14v2M12.500 14v2M14.500 14v2"/></g><path fill="none" stroke="#e01020" stroke-width="1.900" d="M3 8.300C5 6 6 4.200 7.500 4.400S10 7.400 12 7.300S14.500 5 15.800 3"/></svg><div class="t" style="left:418px;top:75px;font-size:11.5px;letter-spacing:-.37px">Senderschaltung.raw</div>
<div class="a" style="left:2px;top:92px;width:1676px;height:1px;background:#fff"></div>
<div class="a" style="left:1px;top:94px;width:1677px;height:1px;background:#000"></div>
<div class="a" style="left:1px;top:94px;width:1px;height:908px;background:#000"></div>
<div class="a" style="left:1678px;top:70px;width:1px;height:932px;background:#fff"></div>
<div class="win" style="left:2px;top:97px;width:838px;height:452px">
<div class="cap" style="left:3px;top:3px;width:830px;background:linear-gradient(90deg,#808080 0,#808080 241px,#999 241px,#999 699px,#c0c0c0 699px);color:#d4d4d4">
<svg class="a" style="left:2px;top:1px" width="16" height="16" viewBox="0 0 16 16" ><rect x="3" y="0" width="13" height="13" fill="#d6d6d6"/><g shape-rendering="crispEdges"><path stroke="#000" d="M2.500 0v14M2 13.500h14"/><path stroke="#e0e0e0" d="M0 .500h2M0 3.500h2M0 5.500h2M0 8.500h2M0 10.500h2M0 13.500h2M2.500 14v2M4.500 14v2M6.500 14v2M8.500 14v2M10.500 14v2M12.500 14v2M14.500 14v2"/></g><path fill="none" stroke="#e01020" stroke-width="1.900" d="M3 8.300C5 6 6 4.200 7.500 4.400S10 7.400 12 7.300S14.500 5 15.800 3"/></svg>
<div class="t" style="left:20.5px;letter-spacing:-.12px">Senderschaltung.fft</div>
<div class="btn" style="left:778px;top:2px;width:16px;height:14px"><svg class="a" style="left:-1px;top:-1px" width="16" height="14" viewBox="0 0 16 14" shape-rendering="crispEdges" ><path stroke="#000" stroke-width="2" d="M4 10h6"/></svg></div>
<div class="btn" style="left:794px;top:2px;width:16px;height:14px"><svg class="a" style="left:-1px;top:-1px" width="16" height="14" viewBox="0 0 16 14" shape-rendering="crispEdges" ><path fill="none" stroke="#000" d="M3.5 2.5h8v8h-8z"/><path stroke="#000" d="M3 3.5h9"/></svg></div>
<div class="btn" style="left:812px;top:2px;width:16px;height:14px"><svg class="a" style="left:-1px;top:-1px" width="16" height="14" viewBox="0 0 16 14" ><path fill="none" stroke="#000" stroke-width="1.7" d="M4.2 3.2l6.6 6.6M10.8 3.2l-6.6 6.6"/></svg></div>
</div>
<div class="cl" style="left:4px;top:23px;width:828px;height:422px"></div>
</div>
<div class="win" style="left:840px;top:97px;width:838px;height:452px">
<div class="cap" style="left:3px;top:3px;width:830px;background:linear-gradient(90deg,#808080 0,#808080 241px,#999 241px,#999 699px,#c0c0c0 699px);color:#d4d4d4">
<svg class="a" style="left:2px;top:1px" width="16" height="16" viewBox="0 0 16 16" ><rect x="3" y="0" width="13" height="13" fill="#d6d6d6"/><g shape-rendering="crispEdges"><path stroke="#000" d="M2.500 0v14M2 13.500h14"/><path stroke="#e0e0e0" d="M0 .500h2M0 3.500h2M0 5.500h2M0 8.500h2M0 10.500h2M0 13.500h2M2.500 14v2M4.500 14v2M6.500 14v2M8.500 14v2M10.500 14v2M12.500 14v2M14.500 14v2"/></g><path fill="none" stroke="#e01020" stroke-width="1.900" d="M3 8.300C5 6 6 4.200 7.500 4.400S10 7.400 12 7.300S14.500 5 15.800 3"/></svg>
<div class="t" style="left:20.5px;letter-spacing:-.12px">Senderschaltung.fft</div>
<div class="btn" style="left:778px;top:2px;width:16px;height:14px"><svg class="a" style="left:-1px;top:-1px" width="16" height="14" viewBox="0 0 16 14" shape-rendering="crispEdges" ><path stroke="#000" stroke-width="2" d="M4 10h6"/></svg></div>
<div class="btn" style="left:794px;top:2px;width:16px;height:14px"><svg class="a" style="left:-1px;top:-1px" width="16" height="14" viewBox="0 0 16 14" shape-rendering="crispEdges" ><path fill="none" stroke="#000" d="M3.5 2.5h8v8h-8z"/><path stroke="#000" d="M3 3.5h9"/></svg></div>
<div class="btn" style="left:812px;top:2px;width:16px;height:14px"><svg class="a" style="left:-1px;top:-1px" width="16" height="14" viewBox="0 0 16 14" ><path fill="none" stroke="#000" stroke-width="1.7" d="M4.2 3.2l6.6 6.6M10.8 3.2l-6.6 6.6"/></svg></div>
</div>
<div class="cl" style="left:4px;top:23px;width:828px;height:422px"></div>
</div>
<div class="win" style="left:2px;top:549px;width:1676px;height:452px">
<div class="cap" style="left:3px;top:3px;width:1668px;background:linear-gradient(90deg,#000080 0,#000080 303px,#0030a0 303px,#0030a0 967px,#0030d0 967px,#0030d0 981px,#0066cc 981px,#0066cc 1560px,#0099cc 1560px);color:#fff">
<svg class="a" style="left:2px;top:1px" width="16" height="16" viewBox="0 0 16 16" ><rect x="3" y="0" width="13" height="13" fill="#d6d6d6"/><g shape-rendering="crispEdges"><path stroke="#000" d="M2.500 0v14M2 13.500h14"/><path stroke="#e0e0e0" d="M0 .500h2M0 3.500h2M0 5.500h2M0 8.500h2M0 10.500h2M0 13.500h2M2.500 14v2M4.500 14v2M6.500 14v2M8.500 14v2M10.500 14v2M12.500 14v2M14.500 14v2"/></g><path fill="none" stroke="#e01020" stroke-width="1.900" d="M3 8.300C5 6 6 4.200 7.500 4.400S10 7.400 12 7.300S14.500 5 15.800 3"/></svg>
<div class="t" style="left:20.5px;letter-spacing:-.12px">Senderschaltung.raw</div>
<div class="btn" style="left:1616px;top:2px;width:16px;height:14px"><svg class="a" style="left:-1px;top:-1px" width="16" height="14" viewBox="0 0 16 14" shape-rendering="crispEdges" ><path stroke="#000" stroke-width="2" d="M4 10h6"/></svg></div>
<div class="btn" style="left:1632px;top:2px;width:16px;height:14px"><svg class="a" style="left:-1px;top:-1px" width="16" height="14" viewBox="0 0 16 14" shape-rendering="crispEdges" ><path fill="none" stroke="#000" d="M3.5 2.5h8v8h-8z"/><path stroke="#000" d="M3 3.5h9"/></svg></div>
<div class="btn" style="left:1650px;top:2px;width:16px;height:14px"><svg class="a" style="left:-1px;top:-1px" width="16" height="14" viewBox="0 0 16 14" ><path fill="none" stroke="#000" stroke-width="1.7" d="M4.2 3.2l6.6 6.6M10.8 3.2l-6.6 6.6"/></svg></div>
</div>
<div class="cl" style="left:4px;top:23px;width:1666px;height:422px"></div>
</div>
<svg width="1680" height="1050" viewBox="0 0 1680 1050">
<g shape-rendering="crispEdges" stroke-width="1">
<line x1="62.0" x2="793.0" y1="174.5" y2="174.5" stroke="#7c7c7c" stroke-dasharray="3 3"/>
<line x1="62.0" x2="793.0" y1="209.5" y2="209.5" stroke="#7c7c7c" stroke-dasharray="3 3"/>
<line x1="62.0" x2="793.0" y1="243.5" y2="243.5" stroke="#7c7c7c" stroke-dasharray="3 3"/>
<line x1="62.0" x2="793.0" y1="277.5" y2="277.5" stroke="#7c7c7c" stroke-dasharray="3 3"/>
<line x1="62.0" x2="793.0" y1="311.5" y2="311.5" stroke="#7c7c7c" stroke-dasharray="3 3"/>
<line x1="62.0" x2="793.0" y1="346.5" y2="346.5" stroke="#7c7c7c" stroke-dasharray="3 3"/>
<line x1="62.0" x2="793.0" y1="380.5" y2="380.5" stroke="#7c7c7c" stroke-dasharray="3 3"/>
<line x1="62.0" x2="793.0" y1="414.5" y2="414.5" stroke="#7c7c7c" stroke-dasharray="3 3"/>
<line x1="62.0" x2="793.0" y1="448.5" y2="448.5" stroke="#7c7c7c" stroke-dasharray="3 3"/>
<line x1="62.0" x2="793.0" y1="483.5" y2="483.5" stroke="#7c7c7c" stroke-dasharray="3 3"/>
<line x1="111.5" x2="111.5" y1="140.0" y2="517.0" stroke="#7c7c7c" stroke-dasharray="3 3" stroke-dashoffset="3"/>
<line x1="139.5" x2="139.5" y1="140.0" y2="517.0" stroke="#7c7c7c" stroke-dasharray="3 3" stroke-dashoffset="3"/>
<line x1="159.5" x2="159.5" y1="140.0" y2="517.0" stroke="#7c7c7c" stroke-dasharray="3 3" stroke-dashoffset="3"/>
<line x1="175.5" x2="175.5" y1="140.0" y2="517.0" stroke="#7c7c7c" stroke-dasharray="3 3" stroke-dashoffset="3"/>
<line x1="188.5" x2="188.5" y1="140.0" y2="517.0" stroke="#7c7c7c" stroke-dasharray="3 3" stroke-dashoffset="3"/>
<line x1="199.5" x2="199.5" y1="140.0" y2="517.0" stroke="#7c7c7c" stroke-dasharray="3 3" stroke-dashoffset="3"/>
<line x1="208.5" x2="208.5" y1="140.0" y2="517.0" stroke="#7c7c7c" stroke-dasharray="3 3" stroke-dashoffset="3"/>
<line x1="216.5" x2="216.5" y1="140.0" y2="517.0" stroke="#7c7c7c" stroke-dasharray="3 3" stroke-dashoffset="3"/>
<line x1="224.5" x2="224.5" y1="140.0" y2="517.0" stroke="#7c7c7c" stroke-dasharray="3 3" stroke-dashoffset="3"/>
<line x1="272.5" x2="272.5" y1="140.0" y2="517.0" stroke="#7c7c7c" stroke-dasharray="3 3" stroke-dashoffset="3"/>
<line x1="301.5" x2="301.5" y1="140.0" y2="517.0" stroke="#7c7c7c" stroke-dasharray="3 3" stroke-dashoffset="3"/>
<line x1="321.5" x2="321.5" y1="140.0" y2="517.0" stroke="#7c7c7c" stroke-dasharray="3 3" stroke-dashoffset="3"/>
<line x1="337.5" x2="337.5" y1="140.0" y2="517.0" stroke="#7c7c7c" stroke-dasharray="3 3" stroke-dashoffset="3"/>
<line x1="350.5" x2="350.5" y1="140.0" y2="517.0" stroke="#7c7c7c" stroke-dasharray="3 3" stroke-dashoffset="3"/>
<line x1="361.5" x2="361.5" y1="140.0" y2="517.0" stroke="#7c7c7c" stroke-dasharray="3 3" stroke-dashoffset="3"/>
<line x1="370.5" x2="370.5" y1="140.0" y2="517.0" stroke="#7c7c7c" stroke-dasharray="3 3" stroke-dashoffset="3"/>
<line x1="378.5" x2="378.5" y1="140.0" y2="517.0" stroke="#7c7c7c" stroke-dasharray="3 3" stroke-dashoffset="3"/>
<line x1="386.5" x2="386.5" y1="140.0" y2="517.0" stroke="#7c7c7c" stroke-dasharray="3 3" stroke-dashoffset="3"/>
<line x1="434.5" x2="434.5" y1="140.0" y2="517.0" stroke="#7c7c7c" stroke-dasharray="3 3" stroke-dashoffset="3"/>
<line x1="463.5" x2="463.5" y1="140.0" y2="517.0" stroke="#7c7c7c" stroke-dasharray="3 3" stroke-dashoffset="3"/>
<line x1="483.5" x2="483.5" y1="140.0" y2="517.0" stroke="#7c7c7c" stroke-dasharray="3 3" stroke-dashoffset="3"/>
<line x1="499.5" x2="499.5" y1="140.0" y2="517.0" stroke="#7c7c7c" stroke-dasharray="3 3" stroke-dashoffset="3"/>
<line x1="512.5" x2="512.5" y1="140.0" y2="517.0" stroke="#7c7c7c" stroke-dasharray="3 3" stroke-dashoffset="3"/>
<line x1="523.5" x2="523.5" y1="140.0" y2="517.0" stroke="#7c7c7c" stroke-dasharray="3 3" stroke-dashoffset="3"/>
<line x1="532.5" x2="532.5" y1="140.0" y2="517.0" stroke="#7c7c7c" stroke-dasharray="3 3" stroke-dashoffset="3"/>
<line x1="540.5" x2="540.5" y1="140.0" y2="517.0" stroke="#7c7c7c" stroke-dasharray="3 3" stroke-dashoffset="3"/>
<line x1="548.5" x2="548.5" y1="140.0" y2="517.0" stroke="#7c7c7c" stroke-dasharray="3 3" stroke-dashoffset="3"/>
<line x1="596.5" x2="596.5" y1="140.0" y2="517.0" stroke="#7c7c7c" stroke-dasharray="3 3" stroke-dashoffset="3"/>
<line x1="625.5" x2="625.5" y1="140.0" y2="517.0" stroke="#7c7c7c" stroke-dasharray="3 3" stroke-dashoffset="3"/>
<line x1="645.5" x2="645.5" y1="140.0" y2="517.0" stroke="#7c7c7c" stroke-dasharray="3 3" stroke-dashoffset="3"/>
<line x1="661.5" x2="661.5" y1="140.0" y2="517.0" stroke="#7c7c7c" stroke-dasharray="3 3" stroke-dashoffset="3"/>
<line x1="674.5" x2="674.5" y1="140.0" y2="517.0" stroke="#7c7c7c" stroke-dasharray="3 3" stroke-dashoffset="3"/>
<line x1="684.5" x2="684.5" y1="140.0" y2="517.0" stroke="#7c7c7c" stroke-dasharray="3 3" stroke-dashoffset="3"/>
<line x1="694.5" x2="694.5" y1="140.0" y2="517.0" stroke="#7c7c7c" stroke-dasharray="3 3" stroke-dashoffset="3"/>
<line x1="702.5" x2="702.5" y1="140.0" y2="517.0" stroke="#7c7c7c" stroke-dasharray="3 3" stroke-dashoffset="3"/>
<line x1="710.5" x2="710.5" y1="140.0" y2="517.0" stroke="#7c7c7c" stroke-dasharray="3 3" stroke-dashoffset="3"/>
<line x1="758.5" x2="758.5" y1="140.0" y2="517.0" stroke="#7c7c7c" stroke-dasharray="3 3" stroke-dashoffset="3"/>
<line x1="787.5" x2="787.5" y1="140.0" y2="517.0" stroke="#7c7c7c" stroke-dasharray="3 3" stroke-dashoffset="3"/>
<line x1="55.0" x2="794.0" y1="140.5" y2="140.5" stroke="#a6a6d2"/>
<line x1="55.0" x2="794.0" y1="517.5" y2="517.5" stroke="#a6a6d2"/>
<line x1="62.5" x2="62.5" y1="140.0" y2="524.0" stroke="#a6a6d2"/>
<line x1="793.5" x2="793.5" y1="140.0" y2="518.0" stroke="#a6a6d2"/>
<line x1="55.0" x2="62.5" y1="174.5" y2="174.5" stroke="#a6a6d2"/>
<line x1="55.0" x2="62.5" y1="209.5" y2="209.5" stroke="#a6a6d2"/>
<line x1="55.0" x2="62.5" y1="243.5" y2="243.5" stroke="#a6a6d2"/>
<line x1="55.0" x2="62.5" y1="277.5" y2="277.5" stroke="#a6a6d2"/>
<line x1="55.0" x2="62.5" y1="311.5" y2="311.5" stroke="#a6a6d2"/>
<line x1="55.0" x2="62.5" y1="346.5" y2="346.5" stroke="#a6a6d2"/>
<line x1="55.0" x2="62.5" y1="380.5" y2="380.5" stroke="#a6a6d2"/>
<line x1="55.0" x2="62.5" y1="414.5" y2="414.5" stroke="#a6a6d2"/>
<line x1="55.0" x2="62.5" y1="448.5" y2="448.5" stroke="#a6a6d2"/>
<line x1="55.0" x2="62.5" y1="483.5" y2="483.5" stroke="#a6a6d2"/>
<line x1="111.5" x2="111.5" y1="517.5" y2="521.0" stroke="#a6a6d2"/>
<line x1="139.5" x2="139.5" y1="517.5" y2="521.0" stroke="#a6a6d2"/>
<line x1="159.5" x2="159.5" y1="517.5" y2="521.0" stroke="#a6a6d2"/>
<line x1="175.5" x2="175.5" y1="517.5" y2="521.0" stroke="#a6a6d2"/>
<line x1="188.5" x2="188.5" y1="517.5" y2="521.0" stroke="#a6a6d2"/>
<line x1="199.5" x2="199.5" y1="517.5" y2="521.0" stroke="#a6a6d2"/>
<line x1="208.5" x2="208.5" y1="517.5" y2="521.0" stroke="#a6a6d2"/>
<line x1="216.5" x2="216.5" y1="517.5" y2="521.0" stroke="#a6a6d2"/>
<line x1="224.5" x2="224.5" y1="517.5" y2="524.0" stroke="#a6a6d2"/>
<line x1="272.5" x2="272.5" y1="517.5" y2="521.0" stroke="#a6a6d2"/>
<line x1="301.5" x2="301.5" y1="517.5" y2="521.0" stroke="#a6a6d2"/>
<line x1="321.5" x2="321.5" y1="517.5" y2="521.0" stroke="#a6a6d2"/>
<line x1="337.5" x2="337.5" y1="517.5" y2="521.0" stroke="#a6a6d2"/>
<line x1="350.5" x2="350.5" y1="517.5" y2="521.0" stroke="#a6a6d2"/>
<line x1="361.5" x2="361.5" y1="517.5" y2="521.0" stroke="#a6a6d2"/>
<line x1="370.5" x2="370.5" y1="517.5" y2="521.0" stroke="#a6a6d2"/>
<line x1="378.5" x2="378.5" y1="517.5" y2="521.0" stroke="#a6a6d2"/>
<line x1="386.5" x2="386.5" y1="517.5" y2="524.0" stroke="#a6a6d2"/>
<line x1="434.5" x2="434.5" y1="517.5" y2="521.0" stroke="#a6a6d2"/>
<line x1="463.5" x2="463.5" y1="517.5" y2="521.0" stroke="#a6a6d2"/>
<line x1="483.5" x2="483.5" y1="517.5" y2="521.0" stroke="#a6a6d2"/>
<line x1="499.5" x2="499.5" y1="517.5" y2="521.0" stroke="#a6a6d2"/>
<line x1="512.5" x2="512.5" y1="517.5" y2="521.0" stroke="#a6a6d2"/>
<line x1="523.5" x2="523.5" y1="517.5" y2="521.0" stroke="#a6a6d2"/>
<line x1="532.5" x2="532.5" y1="517.5" y2="521.0" stroke="#a6a6d2"/>
<line x1="540.5" x2="540.5" y1="517.5" y2="521.0" stroke="#a6a6d2"/>
<line x1="548.5" x2="548.5" y1="517.5" y2="524.0" stroke="#a6a6d2"/>
<line x1="596.5" x2="596.5" y1="517.5" y2="521.0" stroke="#a6a6d2"/>
<line x1="625.5" x2="625.5" y1="517.5" y2="521.0" stroke="#a6a6d2"/>
<line x1="645.5" x2="645.5" y1="517.5" y2="521.0" stroke="#a6a6d2"/>
<line x1="661.5" x2="661.5" y1="517.5" y2="521.0" stroke="#a6a6d2"/>
<line x1="674.5" x2="674.5" y1="517.5" y2="521.0" stroke="#a6a6d2"/>
<line x1="684.5" x2="684.5" y1="517.5" y2="521.0" stroke="#a6a6d2"/>
<line x1="694.5" x2="694.5" y1="517.5" y2="521.0" stroke="#a6a6d2"/>
<line x1="702.5" x2="702.5" y1="517.5" y2="521.0" stroke="#a6a6d2"/>
<line x1="710.5" x2="710.5" y1="517.5" y2="524.0" stroke="#a6a6d2"/>
<line x1="758.5" x2="758.5" y1="517.5" y2="521.0" stroke="#a6a6d2"/>
<line x1="787.5" x2="787.5" y1="517.5" y2="521.0" stroke="#a6a6d2"/>
</g>
<text x="54.0" y="145.1" text-anchor="end" font-size="14" fill="#b0b0dc">10dB</text>
<text x="54.0" y="179.4" text-anchor="end" font-size="14" fill="#b0b0dc">0dB</text>
<text x="54.0" y="213.6" text-anchor="end" font-size="14" fill="#b0b0dc">-10dB</text>
<text x="54.0" y="247.9" text-anchor="end" font-size="14" fill="#b0b0dc">-20dB</text>
<text x="54.0" y="282.2" text-anchor="end" font-size="14" fill="#b0b0dc">-30dB</text>
<text x="54.0" y="316.5" text-anchor="end" font-size="14" fill="#b0b0dc">-40dB</text>
<text x="54.0" y="350.7" text-anchor="end" font-size="14" fill="#b0b0dc">-50dB</text>
<text x="54.0" y="385.0" text-anchor="end" font-size="14" fill="#b0b0dc">-60dB</text>
<text x="54.0" y="419.3" text-anchor="end" font-size="14" fill="#b0b0dc">-70dB</text>
<text x="54.0" y="453.6" text-anchor="end" font-size="14" fill="#b0b0dc">-80dB</text>
<text x="54.0" y="487.8" text-anchor="end" font-size="14" fill="#b0b0dc">-90dB</text>
<text x="54.0" y="522.1" text-anchor="end" font-size="14" fill="#b0b0dc">-100dB</text>
<text x="61.8" y="538.0" text-anchor="middle" font-size="14" fill="#b0b0dc">1.66681MHz</text>
<text x="223.8" y="538.0" text-anchor="middle" font-size="14" fill="#b0b0dc">16.6681MHz</text>
<text x="385.8" y="538.0" text-anchor="middle" font-size="14" fill="#b0b0dc">166.681MHz</text>
<text x="547.8" y="538.0" text-anchor="middle" font-size="14" fill="#b0b0dc">1.66681GHz</text>
<text x="709.8" y="538.0" text-anchor="middle" font-size="14" fill="#b0b0dc">16.6681GHz</text>
<text x="427.0" y="135.0" text-anchor="middle" font-size="12.5" letter-spacing=".4" fill="#72f4a2">V(pulse)</text>
<g shape-rendering="crispEdges" stroke-width="1">
<line x1="900.0" x2="1631.0" y1="174.5" y2="174.5" stroke="#7c7c7c" stroke-dasharray="3 3"/>
<line x1="900.0" x2="1631.0" y1="209.5" y2="209.5" stroke="#7c7c7c" stroke-dasharray="3 3"/>
<line x1="900.0" x2="1631.0" y1="243.5" y2="243.5" stroke="#7c7c7c" stroke-dasharray="3 3"/>
<line x1="900.0" x2="1631.0" y1="277.5" y2="277.5" stroke="#7c7c7c" stroke-dasharray="3 3"/>
<line x1="900.0" x2="1631.0" y1="311.5" y2="311.5" stroke="#7c7c7c" stroke-dasharray="3 3"/>
<line x1="900.0" x2="1631.0" y1="346.5" y2="346.5" stroke="#7c7c7c" stroke-dasharray="3 3"/>
<line x1="900.0" x2="1631.0" y1="380.5" y2="380.5" stroke="#7c7c7c" stroke-dasharray="3 3"/>
<line x1="900.0" x2="1631.0" y1="414.5" y2="414.5" stroke="#7c7c7c" stroke-dasharray="3 3"/>
<line x1="900.0" x2="1631.0" y1="448.5" y2="448.5" stroke="#7c7c7c" stroke-dasharray="3 3"/>
<line x1="900.0" x2="1631.0" y1="483.5" y2="483.5" stroke="#7c7c7c" stroke-dasharray="3 3"/>
<line x1="949.5" x2="949.5" y1="140.0" y2="517.0" stroke="#7c7c7c" stroke-dasharray="3 3" stroke-dashoffset="3"/>
<line x1="977.5" x2="977.5" y1="140.0" y2="517.0" stroke="#7c7c7c" stroke-dasharray="3 3" stroke-dashoffset="3"/>
<line x1="997.5" x2="997.5" y1="140.0" y2="517.0" stroke="#7c7c7c" stroke-dasharray="3 3" stroke-dashoffset="3"/>
<line x1="1013.5" x2="1013.5" y1="140.0" y2="517.0" stroke="#7c7c7c" stroke-dasharray="3 3" stroke-dashoffset="3"/>
<line x1="1026.5" x2="1026.5" y1="140.0" y2="517.0" stroke="#7c7c7c" stroke-dasharray="3 3" stroke-dashoffset="3"/>
<line x1="1037.5" x2="1037.5" y1="140.0" y2="517.0" stroke="#7c7c7c" stroke-dasharray="3 3" stroke-dashoffset="3"/>
<line x1="1046.5" x2="1046.5" y1="140.0" y2="517.0" stroke="#7c7c7c" stroke-dasharray="3 3" stroke-dashoffset="3"/>
<line x1="1054.5" x2="1054.5" y1="140.0" y2="517.0" stroke="#7c7c7c" stroke-dasharray="3 3" stroke-dashoffset="3"/>
<line x1="1062.5" x2="1062.5" y1="140.0" y2="517.0" stroke="#7c7c7c" stroke-dasharray="3 3" stroke-dashoffset="3"/>
<line x1="1110.5" x2="1110.5" y1="140.0" y2="517.0" stroke="#7c7c7c" stroke-dasharray="3 3" stroke-dashoffset="3"/>
<line x1="1139.5" x2="1139.5" y1="140.0" y2="517.0" stroke="#7c7c7c" stroke-dasharray="3 3" stroke-dashoffset="3"/>
<line x1="1159.5" x2="1159.5" y1="140.0" y2="517.0" stroke="#7c7c7c" stroke-dasharray="3 3" stroke-dashoffset="3"/>
<line x1="1175.5" x2="1175.5" y1="140.0" y2="517.0" stroke="#7c7c7c" stroke-dasharray="3 3" stroke-dashoffset="3"/>
<line x1="1188.5" x2="1188.5" y1="140.0" y2="517.0" stroke="#7c7c7c" stroke-dasharray="3 3" stroke-dashoffset="3"/>
<line x1="1199.5" x2="1199.5" y1="140.0" y2="517.0" stroke="#7c7c7c" stroke-dasharray="3 3" stroke-dashoffset="3"/>
<line x1="1208.5" x2="1208.5" y1="140.0" y2="517.0" stroke="#7c7c7c" stroke-dasharray="3 3" stroke-dashoffset="3"/>
<line x1="1216.5" x2="1216.5" y1="140.0" y2="517.0" stroke="#7c7c7c" stroke-dasharray="3 3" stroke-dashoffset="3"/>
<line x1="1224.5" x2="1224.5" y1="140.0" y2="517.0" stroke="#7c7c7c" stroke-dasharray="3 3" stroke-dashoffset="3"/>
<line x1="1272.5" x2="1272.5" y1="140.0" y2="517.0" stroke="#7c7c7c" stroke-dasharray="3 3" stroke-dashoffset="3"/>
<line x1="1301.5" x2="1301.5" y1="140.0" y2="517.0" stroke="#7c7c7c" stroke-dasharray="3 3" stroke-dashoffset="3"/>
<line x1="1321.5" x2="1321.5" y1="140.0" y2="517.0" stroke="#7c7c7c" stroke-dasharray="3 3" stroke-dashoffset="3"/>
<line x1="1337.5" x2="1337.5" y1="140.0" y2="517.0" stroke="#7c7c7c" stroke-dasharray="3 3" stroke-dashoffset="3"/>
<line x1="1350.5" x2="1350.5" y1="140.0" y2="517.0" stroke="#7c7c7c" stroke-dasharray="3 3" stroke-dashoffset="3"/>
<line x1="1361.5" x2="1361.5" y1="140.0" y2="517.0" stroke="#7c7c7c" stroke-dasharray="3 3" stroke-dashoffset="3"/>
<line x1="1370.5" x2="1370.5" y1="140.0" y2="517.0" stroke="#7c7c7c" stroke-dasharray="3 3" stroke-dashoffset="3"/>
<line x1="1378.5" x2="1378.5" y1="140.0" y2="517.0" stroke="#7c7c7c" stroke-dasharray="3 3" stroke-dashoffset="3"/>
<line x1="1386.5" x2="1386.5" y1="140.0" y2="517.0" stroke="#7c7c7c" stroke-dasharray="3 3" stroke-dashoffset="3"/>
<line x1="1434.5" x2="1434.5" y1="140.0" y2="517.0" stroke="#7c7c7c" stroke-dasharray="3 3" stroke-dashoffset="3"/>
<line x1="1463.5" x2="1463.5" y1="140.0" y2="517.0" stroke="#7c7c7c" stroke-dasharray="3 3" stroke-dashoffset="3"/>
<line x1="1483.5" x2="1483.5" y1="140.0" y2="517.0" stroke="#7c7c7c" stroke-dasharray="3 3" stroke-dashoffset="3"/>
<line x1="1499.5" x2="1499.5" y1="140.0" y2="517.0" stroke="#7c7c7c" stroke-dasharray="3 3" stroke-dashoffset="3"/>
<line x1="1512.5" x2="1512.5" y1="140.0" y2="517.0" stroke="#7c7c7c" stroke-dasharray="3 3" stroke-dashoffset="3"/>
<line x1="1522.5" x2="1522.5" y1="140.0" y2="517.0" stroke="#7c7c7c" stroke-dasharray="3 3" stroke-dashoffset="3"/>
<line x1="1532.5" x2="1532.5" y1="140.0" y2="517.0" stroke="#7c7c7c" stroke-dasharray="3 3" stroke-dashoffset="3"/>
<line x1="1540.5" x2="1540.5" y1="140.0" y2="517.0" stroke="#7c7c7c" stroke-dasharray="3 3" stroke-dashoffset="3"/>
<line x1="1548.5" x2="1548.5" y1="140.0" y2="517.0" stroke="#7c7c7c" stroke-dasharray="3 3" stroke-dashoffset="3"/>
<line x1="1596.5" x2="1596.5" y1="140.0" y2="517.0" stroke="#7c7c7c" stroke-dasharray="3 3" stroke-dashoffset="3"/>
<line x1="1625.5" x2="1625.5" y1="140.0" y2="517.0" stroke="#7c7c7c" stroke-dasharray="3 3" stroke-dashoffset="3"/>
<line x1="893.0" x2="1632.0" y1="140.5" y2="140.5" stroke="#a6a6d2"/>
<line x1="893.0" x2="1632.0" y1="517.5" y2="517.5" stroke="#a6a6d2"/>
<line x1="900.5" x2="900.5" y1="140.0" y2="524.0" stroke="#a6a6d2"/>
<line x1="1631.5" x2="1631.5" y1="140.0" y2="518.0" stroke="#a6a6d2"/>
<line x1="893.0" x2="900.5" y1="174.5" y2="174.5" stroke="#a6a6d2"/>
<line x1="893.0" x2="900.5" y1="209.5" y2="209.5" stroke="#a6a6d2"/>
<line x1="893.0" x2="900.5" y1="243.5" y2="243.5" stroke="#a6a6d2"/>
<line x1="893.0" x2="900.5" y1="277.5" y2="277.5" stroke="#a6a6d2"/>
<line x1="893.0" x2="900.5" y1="311.5" y2="311.5" stroke="#a6a6d2"/>
<line x1="893.0" x2="900.5" y1="346.5" y2="346.5" stroke="#a6a6d2"/>
<line x1="893.0" x2="900.5" y1="380.5" y2="380.5" stroke="#a6a6d2"/>
<line x1="893.0" x2="900.5" y1="414.5" y2="414.5" stroke="#a6a6d2"/>
<line x1="893.0" x2="900.5" y1="448.5" y2="448.5" stroke="#a6a6d2"/>
<line x1="893.0" x2="900.5" y1="483.5" y2="483.5" stroke="#a6a6d2"/>
<line x1="949.5" x2="949.5" y1="517.5" y2="521.0" stroke="#a6a6d2"/>
<line x1="977.5" x2="977.5" y1="517.5" y2="521.0" stroke="#a6a6d2"/>
<line x1="997.5" x2="997.5" y1="517.5" y2="521.0" stroke="#a6a6d2"/>
<line x1="1013.5" x2="1013.5" y1="517.5" y2="521.0" stroke="#a6a6d2"/>
<line x1="1026.5" x2="1026.5" y1="517.5" y2="521.0" stroke="#a6a6d2"/>
<line x1="1037.5" x2="1037.5" y1="517.5" y2="521.0" stroke="#a6a6d2"/>
<line x1="1046.5" x2="1046.5" y1="517.5" y2="521.0" stroke="#a6a6d2"/>
<line x1="1054.5" x2="1054.5" y1="517.5" y2="521.0" stroke="#a6a6d2"/>
<line x1="1062.5" x2="1062.5" y1="517.5" y2="524.0" stroke="#a6a6d2"/>
<line x1="1110.5" x2="1110.5" y1="517.5" y2="521.0" stroke="#a6a6d2"/>
<line x1="1139.5" x2="1139.5" y1="517.5" y2="521.0" stroke="#a6a6d2"/>
<line x1="1159.5" x2="1159.5" y1="517.5" y2="521.0" stroke="#a6a6d2"/>
<line x1="1175.5" x2="1175.5" y1="517.5" y2="521.0" stroke="#a6a6d2"/>
<line x1="1188.5" x2="1188.5" y1="517.5" y2="521.0" stroke="#a6a6d2"/>
<line x1="1199.5" x2="1199.5" y1="517.5" y2="521.0" stroke="#a6a6d2"/>
<line x1="1208.5" x2="1208.5" y1="517.5" y2="521.0" stroke="#a6a6d2"/>
<line x1="1216.5" x2="1216.5" y1="517.5" y2="521.0" stroke="#a6a6d2"/>
<line x1="1224.5" x2="1224.5" y1="517.5" y2="524.0" stroke="#a6a6d2"/>
<line x1="1272.5" x2="1272.5" y1="517.5" y2="521.0" stroke="#a6a6d2"/>
<line x1="1301.5" x2="1301.5" y1="517.5" y2="521.0" stroke="#a6a6d2"/>
<line x1="1321.5" x2="1321.5" y1="517.5" y2="521.0" stroke="#a6a6d2"/>
<line x1="1337.5" x2="1337.5" y1="517.5" y2="521.0" stroke="#a6a6d2"/>
<line x1="1350.5" x2="1350.5" y1="517.5" y2="521.0" stroke="#a6a6d2"/>
<line x1="1361.5" x2="1361.5" y1="517.5" y2="521.0" stroke="#a6a6d2"/>
<line x1="1370.5" x2="1370.5" y1="517.5" y2="521.0" stroke="#a6a6d2"/>
<line x1="1378.5" x2="1378.5" y1="517.5" y2="521.0" stroke="#a6a6d2"/>
<line x1="1386.5" x2="1386.5" y1="517.5" y2="524.0" stroke="#a6a6d2"/>
<line x1="1434.5" x2="1434.5" y1="517.5" y2="521.0" stroke="#a6a6d2"/>
<line x1="1463.5" x2="1463.5" y1="517.5" y2="521.0" stroke="#a6a6d2"/>
<line x1="1483.5" x2="1483.5" y1="517.5" y2="521.0" stroke="#a6a6d2"/>
<line x1="1499.5" x2="1499.5" y1="517.5" y2="521.0" stroke="#a6a6d2"/>
<line x1="1512.5" x2="1512.5" y1="517.5" y2="521.0" stroke="#a6a6d2"/>
<line x1="1522.5" x2="1522.5" y1="517.5" y2="521.0" stroke="#a6a6d2"/>
<line x1="1532.5" x2="1532.5" y1="517.5" y2="521.0" stroke="#a6a6d2"/>
<line x1="1540.5" x2="1540.5" y1="517.5" y2="521.0" stroke="#a6a6d2"/>
<line x1="1548.5" x2="1548.5" y1="517.5" y2="524.0" stroke="#a6a6d2"/>
<line x1="1596.5" x2="1596.5" y1="517.5" y2="521.0" stroke="#a6a6d2"/>
<line x1="1625.5" x2="1625.5" y1="517.5" y2="521.0" stroke="#a6a6d2"/>
</g>
<text x="892.0" y="145.1" text-anchor="end" font-size="14" fill="#b0b0dc">10dB</text>
<text x="892.0" y="179.4" text-anchor="end" font-size="14" fill="#b0b0dc">0dB</text>
<text x="892.0" y="213.6" text-anchor="end" font-size="14" fill="#b0b0dc">-10dB</text>
<text x="892.0" y="247.9" text-anchor="end" font-size="14" fill="#b0b0dc">-20dB</text>
<text x="892.0" y="282.2" text-anchor="end" font-size="14" fill="#b0b0dc">-30dB</text>
<text x="892.0" y="316.5" text-anchor="end" font-size="14" fill="#b0b0dc">-40dB</text>
<text x="892.0" y="350.7" text-anchor="end" font-size="14" fill="#b0b0dc">-50dB</text>
<text x="892.0" y="385.0" text-anchor="end" font-size="14" fill="#b0b0dc">-60dB</text>
<text x="892.0" y="419.3" text-anchor="end" font-size="14" fill="#b0b0dc">-70dB</text>
<text x="892.0" y="453.6" text-anchor="end" font-size="14" fill="#b0b0dc">-80dB</text>
<text x="892.0" y="487.8" text-anchor="end" font-size="14" fill="#b0b0dc">-90dB</text>
<text x="892.0" y="522.1" text-anchor="end" font-size="14" fill="#b0b0dc">-100dB</text>
<text x="899.8" y="538.0" text-anchor="middle" font-size="14" fill="#b0b0dc">1.66681MHz</text>
<text x="1061.8" y="538.0" text-anchor="middle" font-size="14" fill="#b0b0dc">16.6681MHz</text>
<text x="1223.8" y="538.0" text-anchor="middle" font-size="14" fill="#b0b0dc">166.681MHz</text>
<text x="1385.8" y="538.0" text-anchor="middle" font-size="14" fill="#b0b0dc">1.66681GHz</text>
<text x="1547.8" y="538.0" text-anchor="middle" font-size="14" fill="#b0b0dc">16.6681GHz</text>
<text x="1264.5" y="135.0" text-anchor="middle" font-size="12.5" letter-spacing=".4" fill="#72f4a2">V(out_re)</text>
<g shape-rendering="crispEdges" stroke-width="1">
<line x1="48.0" x2="1652.0" y1="626.5" y2="626.5" stroke="#7c7c7c" stroke-dasharray="3 3"/>
<line x1="48.0" x2="1652.0" y1="661.5" y2="661.5" stroke="#7c7c7c" stroke-dasharray="3 3"/>
<line x1="48.0" x2="1652.0" y1="695.5" y2="695.5" stroke="#7c7c7c" stroke-dasharray="3 3"/>
<line x1="48.0" x2="1652.0" y1="729.5" y2="729.5" stroke="#7c7c7c" stroke-dasharray="3 3"/>
<line x1="48.0" x2="1652.0" y1="763.5" y2="763.5" stroke="#7c7c7c" stroke-dasharray="3 3"/>
<line x1="48.0" x2="1652.0" y1="798.5" y2="798.5" stroke="#7c7c7c" stroke-dasharray="3 3"/>
<line x1="48.0" x2="1652.0" y1="832.5" y2="832.5" stroke="#7c7c7c" stroke-dasharray="3 3"/>
<line x1="48.0" x2="1652.0" y1="866.5" y2="866.5" stroke="#7c7c7c" stroke-dasharray="3 3"/>
<line x1="48.0" x2="1652.0" y1="900.5" y2="900.5" stroke="#7c7c7c" stroke-dasharray="3 3"/>
<line x1="48.0" x2="1652.0" y1="935.5" y2="935.5" stroke="#7c7c7c" stroke-dasharray="3 3"/>
<line x1="148.5" x2="148.5" y1="592.0" y2="969.0" stroke="#7c7c7c" stroke-dasharray="3 3" stroke-dashoffset="3"/>
<line x1="249.5" x2="249.5" y1="592.0" y2="969.0" stroke="#7c7c7c" stroke-dasharray="3 3" stroke-dashoffset="3"/>
<line x1="349.5" x2="349.5" y1="592.0" y2="969.0" stroke="#7c7c7c" stroke-dasharray="3 3" stroke-dashoffset="3"/>
<line x1="449.5" x2="449.5" y1="592.0" y2="969.0" stroke="#7c7c7c" stroke-dasharray="3 3" stroke-dashoffset="3"/>
<line x1="549.5" x2="549.5" y1="592.0" y2="969.0" stroke="#7c7c7c" stroke-dasharray="3 3" stroke-dashoffset="3"/>
<line x1="650.5" x2="650.5" y1="592.0" y2="969.0" stroke="#7c7c7c" stroke-dasharray="3 3" stroke-dashoffset="3"/>
<line x1="750.5" x2="750.5" y1="592.0" y2="969.0" stroke="#7c7c7c" stroke-dasharray="3 3" stroke-dashoffset="3"/>
<line x1="850.5" x2="850.5" y1="592.0" y2="969.0" stroke="#7c7c7c" stroke-dasharray="3 3" stroke-dashoffset="3"/>
<line x1="950.5" x2="950.5" y1="592.0" y2="969.0" stroke="#7c7c7c" stroke-dasharray="3 3" stroke-dashoffset="3"/>
<line x1="1051.5" x2="1051.5" y1="592.0" y2="969.0" stroke="#7c7c7c" stroke-dasharray="3 3" stroke-dashoffset="3"/>
<line x1="1151.5" x2="1151.5" y1="592.0" y2="969.0" stroke="#7c7c7c" stroke-dasharray="3 3" stroke-dashoffset="3"/>
<line x1="1251.5" x2="1251.5" y1="592.0" y2="969.0" stroke="#7c7c7c" stroke-dasharray="3 3" stroke-dashoffset="3"/>
<line x1="1351.5" x2="1351.5" y1="592.0" y2="969.0" stroke="#7c7c7c" stroke-dasharray="3 3" stroke-dashoffset="3"/>
<line x1="1452.5" x2="1452.5" y1="592.0" y2="969.0" stroke="#7c7c7c" stroke-dasharray="3 3" stroke-dashoffset="3"/>
<line x1="1552.5" x2="1552.5" y1="592.0" y2="969.0" stroke="#7c7c7c" stroke-dasharray="3 3" stroke-dashoffset="3"/>
<line x1="41.0" x2="1653.0" y1="592.5" y2="592.5" stroke="#a6a6d2"/>
<line x1="41.0" x2="1653.0" y1="969.5" y2="969.5" stroke="#a6a6d2"/>
<line x1="48.5" x2="48.5" y1="592.0" y2="976.0" stroke="#a6a6d2"/>
<line x1="1652.5" x2="1652.5" y1="592.0" y2="976.0" stroke="#a6a6d2"/>
<line x1="41.0" x2="48.5" y1="626.5" y2="626.5" stroke="#a6a6d2"/>
<line x1="41.0" x2="48.5" y1="661.5" y2="661.5" stroke="#a6a6d2"/>
<line x1="41.0" x2="48.5" y1="695.5" y2="695.5" stroke="#a6a6d2"/>
<line x1="41.0" x2="48.5" y1="729.5" y2="729.5" stroke="#a6a6d2"/>
<line x1="41.0" x2="48.5" y1="763.5" y2="763.5" stroke="#a6a6d2"/>
<line x1="41.0" x2="48.5" y1="798.5" y2="798.5" stroke="#a6a6d2"/>
<line x1="41.0" x2="48.5" y1="832.5" y2="832.5" stroke="#a6a6d2"/>
<line x1="41.0" x2="48.5" y1="866.5" y2="866.5" stroke="#a6a6d2"/>
<line x1="41.0" x2="48.5" y1="900.5" y2="900.5" stroke="#a6a6d2"/>
<line x1="41.0" x2="48.5" y1="935.5" y2="935.5" stroke="#a6a6d2"/>
<line x1="148.5" x2="148.5" y1="969.5" y2="976.0" stroke="#a6a6d2"/>
<line x1="249.5" x2="249.5" y1="969.5" y2="976.0" stroke="#a6a6d2"/>
<line x1="349.5" x2="349.5" y1="969.5" y2="976.0" stroke="#a6a6d2"/>
<line x1="449.5" x2="449.5" y1="969.5" y2="976.0" stroke="#a6a6d2"/>
<line x1="549.5" x2="549.5" y1="969.5" y2="976.0" stroke="#a6a6d2"/>
<line x1="650.5" x2="650.5" y1="969.5" y2="976.0" stroke="#a6a6d2"/>
<line x1="750.5" x2="750.5" y1="969.5" y2="976.0" stroke="#a6a6d2"/>
<line x1="850.5" x2="850.5" y1="969.5" y2="976.0" stroke="#a6a6d2"/>
<line x1="950.5" x2="950.5" y1="969.5" y2="976.0" stroke="#a6a6d2"/>
<line x1="1051.5" x2="1051.5" y1="969.5" y2="976.0" stroke="#a6a6d2"/>
<line x1="1151.5" x2="1151.5" y1="969.5" y2="976.0" stroke="#a6a6d2"/>
<line x1="1251.5" x2="1251.5" y1="969.5" y2="976.0" stroke="#a6a6d2"/>
<line x1="1351.5" x2="1351.5" y1="969.5" y2="976.0" stroke="#a6a6d2"/>
<line x1="1452.5" x2="1452.5" y1="969.5" y2="976.0" stroke="#a6a6d2"/>
<line x1="1552.5" x2="1552.5" y1="969.5" y2="976.0" stroke="#a6a6d2"/>
</g>
<text x="40.0" y="597.1" text-anchor="end" font-size="14" fill="#b0b0dc">6.3V</text>
<text x="40.0" y="631.4" text-anchor="end" font-size="14" fill="#b0b0dc">5.6V</text>
<text x="40.0" y="665.6" text-anchor="end" font-size="14" fill="#b0b0dc">4.9V</text>
<text x="40.0" y="699.9" text-anchor="end" font-size="14" fill="#b0b0dc">4.2V</text>
<text x="40.0" y="734.2" text-anchor="end" font-size="14" fill="#b0b0dc">3.5V</text>
<text x="40.0" y="768.5" text-anchor="end" font-size="14" fill="#b0b0dc">2.8V</text>
<text x="40.0" y="802.7" text-anchor="end" font-size="14" fill="#b0b0dc">2.1V</text>
<text x="40.0" y="837.0" text-anchor="end" font-size="14" fill="#b0b0dc">1.4V</text>
<text x="40.0" y="871.3" text-anchor="end" font-size="14" fill="#b0b0dc">0.7V</text>
<text x="40.0" y="905.6" text-anchor="end" font-size="14" fill="#b0b0dc">0.0V</text>
<text x="40.0" y="939.8" text-anchor="end" font-size="14" fill="#b0b0dc">-0.7V</text>
<text x="40.0" y="974.1" text-anchor="end" font-size="14" fill="#b0b0dc">-1.4V</text>
<text x="48.0" y="990.0" text-anchor="middle" font-size="14" fill="#b0b0dc">110ns</text>
<text x="148.2" y="990.0" text-anchor="middle" font-size="14" fill="#b0b0dc">120ns</text>
<text x="248.5" y="990.0" text-anchor="middle" font-size="14" fill="#b0b0dc">130ns</text>
<text x="348.8" y="990.0" text-anchor="middle" font-size="14" fill="#b0b0dc">140ns</text>
<text x="449.0" y="990.0" text-anchor="middle" font-size="14" fill="#b0b0dc">150ns</text>
<text x="549.2" y="990.0" text-anchor="middle" font-size="14" fill="#b0b0dc">160ns</text>
<text x="649.5" y="990.0" text-anchor="middle" font-size="14" fill="#b0b0dc">170ns</text>
<text x="749.8" y="990.0" text-anchor="middle" font-size="14" fill="#b0b0dc">180ns</text>
<text x="850.0" y="990.0" text-anchor="middle" font-size="14" fill="#b0b0dc">190ns</text>
<text x="950.2" y="990.0" text-anchor="middle" font-size="14" fill="#b0b0dc">200ns</text>
<text x="1050.5" y="990.0" text-anchor="middle" font-size="14" fill="#b0b0dc">210ns</text>
<text x="1150.8" y="990.0" text-anchor="middle" font-size="14" fill="#b0b0dc">220ns</text>
<text x="1251.0" y="990.0" text-anchor="middle" font-size="14" fill="#b0b0dc">230ns</text>
<text x="1351.2" y="990.0" text-anchor="middle" font-size="14" fill="#b0b0dc">240ns</text>
<text x="1451.5" y="990.0" text-anchor="middle" font-size="14" fill="#b0b0dc">250ns</text>
<text x="1551.8" y="990.0" text-anchor="middle" font-size="14" fill="#b0b0dc">260ns</text>
<text x="1652.0" y="990.0" text-anchor="middle" font-size="14" fill="#b0b0dc">270ns</text>
<text x="449" y="586.5" text-anchor="middle" font-size="12.5" letter-spacing=".4" fill="#72f4a2">V(pulse)</text>
<text x="1250.5" y="586.5" text-anchor="middle" font-size="12.5" letter-spacing=".4" fill="#f0441e">V(out_re)</text>
<g fill="none" stroke-linejoin="round" stroke-width="1.05">
<polyline stroke="#72f4a2" points="63.0,276.6 111.0,276.3 134.7,274.8 159.0,272.6 175.8,270.2 188.8,267.9 195.6,266.1 208.6,259.5 215.4,257.2 223.0,251.9 230.7,245.0 236.8,236.7 242.1,226.0 246.7,210.8 249.0,206.2 249.7,178.8 251.2,160.5 252.5,152.1 253.8,159.0 255.8,172.7 258.2,192.0 261.3,212.6 265.2,225.3 269.8,237.5 275.9,248.2 283.5,256.6 290.4,261.2 294.2,262.4 297.2,259.6 299.5,252.8 300.7,240.6 301.5,227.6 302.6,239.1 304.1,255.8 305.6,269.5 307.1,280.2 309.4,285.5 312.5,288.1 320.1,288.3 324.6,286.6 327.4,282.0 329.1,274.0 330.5,260.9 331.4,267.1 332.0,284.3 332.8,318.6 333.7,337.4 334.9,325.4 336.6,316.3 338.9,312.9 345.1,310.0 349.1,306.0 350.6,300.3 351.1,282.0 351.8,303.7 352.6,321.4 353.4,319.1 356.6,317.4 362.3,318.6 365.7,319.5 366.3,296.3 367.1,320.9 371.4,322.6 378.3,325.4 379.1,310.0 380.0,326.0 384.0,328.9 388.6,334.6 389.7,336.9 390.5,358.6 391.4,310.0 392.2,325.4 395.4,330.0 398.9,335.1 399.4,340.9 400.6,312.9 401.4,328.9 404.6,333.4 407.4,335.7 408.6,339.1 411.4,338.0 414.9,339.7 415.8,345.4 416.6,340.3 421.1,340.9 422.1,348.3 422.5,328.9 423.4,343.7 427.4,343.7 428.2,354.0 428.6,335.1 429.7,347.1 433.1,348.3 433.9,350.6 434.6,340.9 435.4,347.1 438.9,350.0 439.4,342.0 440.2,350.6 444.0,352.9 444.6,358.6 445.1,352.3 448.0,354.6 448.6,364.3 448.9,350.6 449.7,354.0 453.1,355.7 456.6,358.0 457.1,363.7 457.7,358.6 460.6,358.6 463.4,359.7 464.2,354.0 464.9,360.9 470.9,363.1 471.4,366.6 472.0,363.1 477.1,366.0 477.7,370.6 478.3,366.6 482.3,368.3 482.9,366.0 483.4,368.9 488.6,371.1 489.1,368.9 489.7,371.7 497.1,374.6 514.3,382.0 560.0,400.9 610.0,422.5 625.0,428.7 675.0,448.8 710.0,463.8 735.0,473.0 760.0,480.0 775.0,484.2 785.0,485.8 793.2,486.2"/>
<polyline stroke="#72f4a2" points="901.0,304.7 942.2,303.9 959.0,302.8 977.2,301.3 997.1,299.0 1013.8,295.5 1027.5,291.3 1038.2,286.8 1047.3,282.6 1055.0,277.2 1062.6,271.1 1070.2,263.5 1075.5,255.5 1080.9,243.6 1085.4,227.5 1087.0,224.5 1087.7,197.0 1089.2,178.8 1090.5,171.2 1092.3,180.3 1094.3,193.0 1096.4,211.0 1099.4,232.3 1103.2,246.0 1109.3,259.7 1117.0,270.4 1124.6,276.5 1129.1,277.7 1133.0,275.0 1136.0,267.3 1138.0,253.6 1139.5,233.0 1141.3,247.5 1143.6,270.4 1145.9,284.1 1149.0,293.2 1153.5,299.3 1158.9,300.9 1162.0,299.4 1164.9,294.3 1167.1,282.9 1168.5,270.3 1169.4,262.9 1170.3,273.7 1171.1,294.3 1172.3,313.7 1174.0,319.4 1176.3,321.7 1183.1,321.7 1186.6,318.9 1188.3,312.6 1189.2,293.7 1190.0,317.1 1190.8,347.4 1191.7,337.7 1192.9,334.3 1197.4,332.2 1203.7,334.3 1204.3,347.4 1205.1,334.9 1210.6,337.7 1216.3,340.0 1217.2,317.1 1218.3,338.9 1222.0,343.4 1226.0,348.0 1227.4,354.9 1228.3,340.0 1229.1,320.0 1230.2,337.7 1233.4,344.6 1236.3,351.4 1237.4,386.0 1238.0,351.4 1238.7,321.1 1239.6,342.3 1242.6,345.7 1245.4,349.1 1246.3,337.7 1247.1,348.6 1252.9,351.4 1253.5,346.3 1254.2,352.0 1259.1,353.7 1259.9,337.7 1260.9,361.7 1262.0,357.1 1265.4,356.0 1266.2,344.0 1266.8,380.3 1267.9,360.6 1271.1,360.6 1271.7,358.3 1272.6,368.6 1273.4,362.9 1281.4,366.3 1282.4,375.4 1283.1,366.3 1286.0,367.4 1286.5,362.3 1286.9,387.7 1288.0,367.4 1290.6,369.7 1291.1,373.1 1291.7,369.7 1298.0,372.6 1298.6,369.7 1301.8,373.1 1302.3,366.3 1302.9,374.3 1305.4,375.4 1306.0,371.4 1306.6,376.6 1309.1,376.3 1315.6,379.5 1316.0,384.9 1316.5,379.8 1318.0,380.5 1318.4,384.3 1318.9,381.0 1326.6,384.3 1327.0,385.5 1327.4,384.6 1337.5,388.8 1385.0,408.8 1435.0,430.0 1485.0,451.2 1535.0,471.2 1560.0,481.2 1585.0,490.0 1610.0,497.0 1622.5,499.2 1631.2,500.0"/>
<polyline stroke="#f0441e" points="48.5,838.4 50.0,837.7 51.5,837.0 53.0,836.3 54.5,835.5 56.0,834.7 57.5,833.8 59.0,832.8 60.5,831.8 62.0,830.7 63.5,829.6 65.0,828.5 66.5,827.4 68.0,826.4 69.5,825.3 71.0,824.2 72.5,823.1 74.0,822.0 75.5,820.8 77.0,819.7 78.5,818.5 80.0,817.3 81.5,816.1 83.0,814.8 84.5,813.6 86.0,812.3 87.5,811.0 89.0,809.7 90.5,808.4 92.0,807.0 93.5,805.6 95.0,804.2 96.5,802.8 98.0,801.3 99.5,799.8 101.0,798.3 102.5,796.8 104.0,795.2 105.5,793.7 107.0,792.1 108.5,790.5 110.0,789.0 111.5,787.4 113.0,785.8 114.5,784.2 116.0,782.6 117.5,781.0 119.0,779.4 120.5,777.8 122.0,776.2 123.5,774.6 125.0,773.0 126.5,771.3 128.0,769.6 129.5,767.9 131.0,766.2 132.5,764.5 134.0,762.8 135.5,761.3 137.0,759.8 138.5,758.5 140.0,757.3 141.5,756.2 143.0,755.1 144.5,754.0 146.0,752.9 147.5,751.7 149.0,750.3 150.5,748.7 152.0,747.2 153.5,745.7 155.0,744.4 156.5,743.3 158.0,742.1 159.5,741.1 161.0,740.1 162.5,739.1 164.0,738.1 165.5,737.1 167.0,736.1 168.5,735.2 170.0,734.2 171.5,733.3 173.0,732.3 174.5,731.3 176.0,730.2 177.5,729.0 179.0,727.8 180.5,726.5 182.0,725.0 183.5,723.3 185.0,721.3 186.5,718.9 188.0,716.5 189.5,714.2 191.0,712.2 192.5,710.3 194.0,708.4 195.5,706.5 197.0,704.7 198.5,702.8 200.0,700.8 201.5,698.7 203.0,696.6 204.5,694.4 206.0,692.3 207.5,690.3 209.0,688.5 210.5,686.8 212.0,685.1 213.5,683.5 215.0,681.9 216.5,680.5 218.0,679.1 219.5,677.7 221.0,676.4 222.5,675.1 224.0,673.9 225.5,672.7 227.0,671.6 228.5,670.6 230.0,669.6 231.5,668.7 233.0,667.8 234.5,667.0 236.0,666.3 237.5,665.6 239.0,665.0 240.5,664.5 242.0,664.0 243.5,663.5 245.0,663.2 246.5,663.0 248.0,663.0 249.5,663.0 251.0,663.0 252.5,663.0 254.0,663.0 255.5,663.1 257.0,663.5 258.5,664.1 260.0,664.8 261.5,665.5 263.0,666.4 264.5,667.4 266.0,668.6 267.5,669.9 269.0,671.3 270.5,672.8 272.0,674.6 273.5,676.6 275.0,678.7 276.5,680.8 278.0,683.0 279.5,685.1 281.0,687.1 282.5,689.3 284.0,691.4 285.5,693.5 287.0,695.7 288.5,697.9 290.0,700.1 291.5,702.3 293.0,704.5 294.5,706.7 296.0,709.0 297.5,711.3 299.0,713.7 300.5,716.1 302.0,718.5 303.5,721.0 305.0,723.4 306.5,725.8 308.0,728.3 309.5,730.7 311.0,733.1 312.5,735.4 314.0,737.6 315.5,739.8 317.0,742.0 318.5,744.2 320.0,746.4 321.5,748.6 323.0,750.9 324.5,753.2 326.0,755.4 327.5,757.7 329.0,760.0 330.5,762.3 332.0,764.7 333.5,767.1 335.0,769.5 336.5,771.9 338.0,774.2 339.5,776.6 341.0,778.8 342.5,781.0 344.0,783.1 345.5,785.1 347.0,787.2 348.5,789.2 350.0,791.1 351.5,793.1 353.0,795.0 354.5,796.9 356.0,798.7 357.5,800.6 359.0,802.4 360.5,804.1 362.0,805.9 363.5,807.6 365.0,809.2 366.5,810.9 368.0,812.5 369.5,814.1 371.0,815.7 372.5,817.2 374.0,818.6 375.5,820.0 377.0,821.4 378.5,822.7 380.0,823.9 381.5,825.2 383.0,826.3 384.5,827.5 386.0,828.6 387.5,829.7 389.0,830.7 390.5,831.7 392.0,832.7 393.5,833.7 395.0,834.6 396.5,835.4 398.0,836.2 399.5,837.0 401.0,837.7 402.5,838.5 404.0,839.2 405.5,839.8 407.0,840.4 408.5,840.9 410.0,841.3 411.5,841.8 413.0,842.2 414.5,842.5 416.0,842.7 417.5,842.8 419.0,842.8 420.5,842.8 422.0,842.8 423.5,842.8 425.0,842.8 426.5,842.8 428.0,842.8 429.5,842.8 431.0,842.8 432.5,842.7 434.0,842.3 435.5,841.8 437.0,841.2 438.5,840.6 440.0,840.0 441.5,839.4 443.0,838.8 444.5,838.2 446.0,837.5 447.5,836.8 449.0,836.0 450.5,835.2 452.0,834.4 453.5,833.4 455.0,832.5 456.5,831.4 458.0,830.4 459.5,829.3 461.0,828.2 462.5,827.1 464.0,826.0 465.5,824.9 467.0,823.8 468.5,822.7 470.0,821.6 471.5,820.4 473.0,819.3 474.5,818.1 476.0,816.9 477.5,815.6 479.0,814.4 480.5,813.1 482.0,811.9 483.5,810.6 485.0,809.2 486.5,807.9 488.0,806.5 489.5,805.2 491.0,803.8 492.5,802.3 494.0,800.8 495.5,799.3 497.0,797.8 498.5,796.3 500.0,794.7 501.5,793.1 503.0,791.6 504.5,790.0 506.0,788.5 507.5,786.9 509.0,785.3 510.5,783.7 512.0,782.1 513.5,780.5 515.0,778.9 516.5,777.3 518.0,775.7 519.5,774.0 521.0,772.4 522.5,770.7 524.0,769.0 525.5,767.3 527.0,765.6 528.5,763.9 530.0,762.3 531.5,760.8 533.0,759.4 534.5,758.1 536.0,756.9 537.5,755.8 539.0,754.8 540.5,753.7 542.0,752.5 543.5,751.2 545.0,749.8 546.5,748.2 548.0,746.7 549.5,745.3 551.0,744.0 552.5,742.9 554.0,741.8 555.5,740.8 557.0,739.7 558.5,738.7 560.0,737.7 561.5,736.7 563.0,735.8 564.5,734.9 566.0,733.9 567.5,733.0 569.0,732.0 570.5,730.9 572.0,729.8 573.5,728.6 575.0,727.4 576.5,726.0 578.0,724.5 579.5,722.7 581.0,720.5 582.5,718.1 584.0,715.7 585.5,713.5 587.0,711.5 588.5,709.6 590.0,707.8 591.5,705.9 593.0,704.0 594.5,702.1 596.0,700.1 597.5,698.0 599.0,695.8 600.5,693.7 602.0,691.6 603.5,689.7 605.0,687.9 606.5,686.2 608.0,684.5 609.5,682.9 611.0,681.4 612.5,680.0 614.0,678.6 615.5,677.3 617.0,676.0 618.5,674.7 620.0,673.5 621.5,672.4 623.0,671.3 624.5,670.2 626.0,669.3 627.5,668.4 629.0,667.6 630.5,666.8 632.0,666.0 633.5,665.4 635.0,664.9 636.5,664.3 638.0,663.8 639.5,663.4 641.0,663.1 642.5,663.0 644.0,663.0 645.5,663.0 647.0,663.0 648.5,663.0 650.0,663.0 651.5,663.2 653.0,663.6 654.5,664.3 656.0,665.0 657.5,665.8 659.0,666.7 660.5,667.7 662.0,669.0 663.5,670.3 665.0,671.8 666.5,673.4 668.0,675.3 669.5,677.3 671.0,679.4 672.5,681.6 674.0,683.7 675.5,685.8 677.0,687.8 678.5,690.0 680.0,692.1 681.5,694.3 683.0,696.4 684.5,698.6 686.0,700.8 687.5,703.0 689.0,705.2 690.5,707.5 692.0,709.8 693.5,712.1 695.0,714.5 696.5,716.9 698.0,719.3 699.5,721.8 701.0,724.2 702.5,726.7 704.0,729.1 705.5,731.5 707.0,733.9 708.5,736.1 710.0,738.3 711.5,740.5 713.0,742.7 714.5,744.9 716.0,747.1 717.5,749.4 719.0,751.6 720.5,753.9 722.0,756.2 723.5,758.5 725.0,760.8 726.5,763.1 728.0,765.5 729.5,767.9 731.0,770.3 732.5,772.7 734.0,775.0 735.5,777.3 737.0,779.5 738.5,781.7 740.0,783.8 741.5,785.8 743.0,787.8 744.5,789.8 746.0,791.8 747.5,793.7 749.0,795.6 750.5,797.5 752.0,799.4 753.5,801.2 755.0,803.0 756.5,804.7 758.0,806.4 759.5,808.1 761.0,809.8 762.5,811.5 764.0,813.1 765.5,814.7 767.0,816.2 768.5,817.7 770.0,819.1 771.5,820.5 773.0,821.8 774.5,823.1 776.0,824.3 777.5,825.6 779.0,826.7 780.5,827.9 782.0,829.0 783.5,830.0 785.0,831.0 786.5,832.0 788.0,833.0 789.5,834.0 791.0,834.9 792.5,835.7 794.0,836.5 795.5,837.3 797.0,838.0 798.5,838.7 800.0,839.4 801.5,840.0 803.0,840.6 804.5,841.1 806.0,841.5 807.5,841.9 809.0,842.3 810.5,842.6 812.0,842.8 813.5,842.8 815.0,842.8 816.5,842.8 818.0,842.8 819.5,842.8 821.0,842.8 822.5,842.8 824.0,842.8 825.5,842.8 827.0,842.8 828.5,842.6 830.0,842.1 831.5,841.6 833.0,841.0 834.5,840.4 836.0,839.8 837.5,839.2 839.0,838.6 840.5,837.9 842.0,837.3 843.5,836.5 845.0,835.7 846.5,834.9 848.0,834.1 849.5,833.1 851.0,832.1 852.5,831.1 854.0,830.0 855.5,828.9 857.0,827.8 858.5,826.7 860.0,825.6 861.5,824.6 863.0,823.5 864.5,822.3 866.0,821.2 867.5,820.0 869.0,818.9 870.5,817.7 872.0,816.5 873.5,815.2 875.0,814.0 876.5,812.7 878.0,811.4 879.5,810.1 881.0,808.8 882.5,807.5 884.0,806.1 885.5,804.7 887.0,803.3 888.5,801.8 890.0,800.3 891.5,798.8 893.0,797.3 894.5,795.8 896.0,794.2 897.5,792.6 899.0,791.1 900.5,789.5 902.0,787.9 903.5,786.4 905.0,784.8 906.5,783.2 908.0,781.6 909.5,780.0 911.0,778.3 912.5,776.7 914.0,775.1 915.5,773.5 917.0,771.9 918.5,770.2 920.0,768.4 921.5,766.7 923.0,765.0 924.5,763.4 926.0,761.8 927.5,760.3 929.0,758.9 930.5,757.7 932.0,756.6 933.5,755.5 935.0,754.4 936.5,753.3 938.0,752.1 939.5,750.8 941.0,749.3 942.5,747.7 944.0,746.2 945.5,744.8 947.0,743.6 948.5,742.5 950.0,741.4 951.5,740.4 953.0,739.4 954.5,738.4 956.0,737.4 957.5,736.4 959.0,735.5 960.5,734.5 962.0,733.6 963.5,732.7 965.0,731.7 966.5,730.6 968.0,729.4 969.5,728.2 971.0,726.9 972.5,725.5 974.0,723.9 975.5,722.0 977.0,719.7 978.5,717.3 980.0,714.9 981.5,712.9 983.0,710.9 984.5,709.0 986.0,707.1 987.5,705.3 989.0,703.4 990.5,701.5 992.0,699.4 993.5,697.3 995.0,695.1 996.5,693.0 998.0,691.0 999.5,689.1 1001.0,687.3 1002.5,685.6 1004.0,684.0 1005.5,682.4 1007.0,681.0 1008.5,679.6 1010.0,678.2 1011.5,676.9 1013.0,675.6 1014.5,674.3 1016.0,673.1 1017.5,672.0 1019.0,670.9 1020.5,669.9 1022.0,669.0 1023.5,668.1 1025.0,667.3 1026.5,666.5 1028.0,665.8 1029.5,665.2 1031.0,664.7 1032.5,664.2 1034.0,663.7 1035.5,663.3 1037.0,663.0 1038.5,663.0 1040.0,663.0 1041.5,663.0 1043.0,663.0 1044.5,663.0 1046.0,663.0 1047.5,663.3 1049.0,663.8 1050.5,664.5 1052.0,665.3 1053.5,666.1 1055.0,667.0 1056.5,668.1 1058.0,669.4 1059.5,670.8 1061.0,672.3 1062.5,674.0 1064.0,675.9 1065.5,678.0 1067.0,680.1 1068.5,682.3 1070.0,684.4 1071.5,686.4 1073.0,688.5 1074.5,690.7 1076.0,692.8 1077.5,695.0 1079.0,697.1 1080.5,699.3 1082.0,701.5 1083.5,703.7 1085.0,706.0 1086.5,708.2 1088.0,710.5 1089.5,712.9 1091.0,715.3 1092.5,717.7 1094.0,720.1 1095.5,722.6 1097.0,725.0 1098.5,727.5 1100.0,729.9 1101.5,732.3 1103.0,734.6 1104.5,736.9 1106.0,739.1 1107.5,741.2 1109.0,743.4 1110.5,745.7 1112.0,747.9 1113.5,750.1 1115.0,752.4 1116.5,754.7 1118.0,756.9 1119.5,759.2 1121.0,761.5 1122.5,763.9 1124.0,766.3 1125.5,768.7 1127.0,771.1 1128.5,773.5 1130.0,775.8 1131.5,778.1 1133.0,780.2 1134.5,782.4 1136.0,784.5 1137.5,786.5 1139.0,788.5 1140.5,790.5 1142.0,792.4 1143.5,794.4 1145.0,796.2 1146.5,798.1 1148.0,800.0 1149.5,801.8 1151.0,803.5 1152.5,805.3 1154.0,807.0 1155.5,808.7 1157.0,810.4 1158.5,812.0 1160.0,813.6 1161.5,815.2 1163.0,816.7 1164.5,818.2 1166.0,819.6 1167.5,820.9 1169.0,822.2 1170.5,823.5 1172.0,824.8 1173.5,826.0 1175.0,827.1 1176.5,828.2 1178.0,829.3 1179.5,830.4 1181.0,831.4 1182.5,832.4 1184.0,833.3 1185.5,834.3 1187.0,835.1 1188.5,836.0 1190.0,836.8 1191.5,837.5 1193.0,838.2 1194.5,838.9 1196.0,839.6 1197.5,840.2 1199.0,840.7 1200.5,841.2 1202.0,841.6 1203.5,842.0 1205.0,842.4 1206.5,842.7 1208.0,842.8 1209.5,842.8 1211.0,842.8 1212.5,842.8 1214.0,842.8 1215.5,842.8 1217.0,842.8 1218.5,842.8 1220.0,842.8 1221.5,842.8 1223.0,842.7 1224.5,842.4 1226.0,842.0 1227.5,841.4 1229.0,840.8 1230.5,840.2 1232.0,839.6 1233.5,839.0 1235.0,838.4 1236.5,837.7 1238.0,837.0 1239.5,836.3 1241.0,835.5 1242.5,834.7 1244.0,833.8 1245.5,832.8 1247.0,831.8 1248.5,830.7 1250.0,829.6 1251.5,828.5 1253.0,827.4 1254.5,826.4 1256.0,825.3 1257.5,824.2 1259.0,823.1 1260.5,822.0 1262.0,820.8 1263.5,819.7 1265.0,818.5 1266.5,817.3 1268.0,816.1 1269.5,814.8 1271.0,813.6 1272.5,812.3 1274.0,811.0 1275.5,809.7 1277.0,808.4 1278.5,807.0 1280.0,805.6 1281.5,804.2 1283.0,802.8 1284.5,801.3 1286.0,799.8 1287.5,798.3 1289.0,796.8 1290.5,795.2 1292.0,793.7 1293.5,792.1 1295.0,790.5 1296.5,789.0 1298.0,787.4 1299.5,785.8 1301.0,784.2 1302.5,782.6 1304.0,781.0 1305.5,779.4 1307.0,777.8 1308.5,776.2 1310.0,774.6 1311.5,773.0 1313.0,771.3 1314.5,769.6 1316.0,767.9 1317.5,766.2 1319.0,764.5 1320.5,762.8 1322.0,761.3 1323.5,759.8 1325.0,758.5 1326.5,757.3 1328.0,756.2 1329.5,755.1 1331.0,754.0 1332.5,752.9 1334.0,751.7 1335.5,750.3 1337.0,748.7 1338.5,747.2 1340.0,745.7 1341.5,744.4 1343.0,743.3 1344.5,742.1 1346.0,741.1 1347.5,740.1 1349.0,739.1 1350.5,738.1 1352.0,737.1 1353.5,736.1 1355.0,735.2 1356.5,734.2 1358.0,733.3 1359.5,732.3 1361.0,731.3 1362.5,730.2 1364.0,729.0 1365.5,727.8 1367.0,726.5 1368.5,725.0 1370.0,723.3 1371.5,721.3 1373.0,718.9 1374.5,716.5 1376.0,714.2 1377.5,712.2 1379.0,710.3 1380.5,708.4 1382.0,706.5 1383.5,704.7 1385.0,702.8 1386.5,700.8 1388.0,698.7 1389.5,696.6 1391.0,694.4 1392.5,692.3 1394.0,690.3 1395.5,688.5 1397.0,686.8 1398.5,685.1 1400.0,683.5 1401.5,681.9 1403.0,680.5 1404.5,679.1 1406.0,677.7 1407.5,676.4 1409.0,675.1 1410.5,673.9 1412.0,672.7 1413.5,671.6 1415.0,670.6 1416.5,669.6 1418.0,668.7 1419.5,667.8 1421.0,667.0 1422.5,666.3 1424.0,665.6 1425.5,665.0 1427.0,664.5 1428.5,664.0 1430.0,663.5 1431.5,663.2 1433.0,663.0 1434.5,663.0 1436.0,663.0 1437.5,663.0 1439.0,663.0 1440.5,663.0 1442.0,663.1 1443.5,663.5 1445.0,664.1 1446.5,664.8 1448.0,665.5 1449.5,666.4 1451.0,667.4 1452.5,668.6 1454.0,669.9 1455.5,671.3 1457.0,672.8 1458.5,674.6 1460.0,676.6 1461.5,678.7 1463.0,680.8 1464.5,683.0 1466.0,685.1 1467.5,687.1 1469.0,689.3 1470.5,691.4 1472.0,693.5 1473.5,695.7 1475.0,697.9 1476.5,700.1 1478.0,702.3 1479.5,704.5 1481.0,706.7 1482.5,709.0 1484.0,711.3 1485.5,713.7 1487.0,716.1 1488.5,718.5 1490.0,721.0 1491.5,723.4 1493.0,725.8 1494.5,728.3 1496.0,730.7 1497.5,733.1 1499.0,735.4 1500.5,737.6 1502.0,739.8 1503.5,742.0 1505.0,744.2 1506.5,746.4 1508.0,748.6 1509.5,750.9 1511.0,753.2 1512.5,755.4 1514.0,757.7 1515.5,760.0 1517.0,762.3 1518.5,764.7 1520.0,767.1 1521.5,769.5 1523.0,771.9 1524.5,774.2 1526.0,776.6 1527.5,778.8 1529.0,781.0 1530.5,783.1 1532.0,785.1 1533.5,787.2 1535.0,789.2 1536.5,791.1 1538.0,793.1 1539.5,795.0 1541.0,796.9 1542.5,798.7 1544.0,800.6 1545.5,802.4 1547.0,804.1 1548.5,805.9 1550.0,807.6 1551.5,809.2 1553.0,810.9 1554.5,812.5 1556.0,814.1 1557.5,815.7 1559.0,817.2 1560.5,818.6 1562.0,820.0 1563.5,821.4 1565.0,822.7 1566.5,823.9 1568.0,825.2 1569.5,826.3 1571.0,827.5 1572.5,828.6 1574.0,829.7 1575.5,830.7 1577.0,831.7 1578.5,832.7 1580.0,833.7 1581.5,834.6 1583.0,835.4 1584.5,836.2 1586.0,837.0 1587.5,837.7 1589.0,838.5 1590.5,839.2 1592.0,839.8 1593.5,840.4 1595.0,840.9 1596.5,841.3 1598.0,841.8 1599.5,842.2 1601.0,842.5 1602.5,842.7 1604.0,842.8 1605.5,842.8 1607.0,842.8 1608.5,842.8 1610.0,842.8 1611.5,842.8 1613.0,842.8 1614.5,842.8 1616.0,842.8 1617.5,842.8 1619.0,842.7 1620.5,842.3 1622.0,841.8 1623.5,841.2 1625.0,840.6 1626.5,840.0 1628.0,839.4 1629.5,838.8 1631.0,838.2 1632.5,837.5 1634.0,836.8 1635.5,836.0 1637.0,835.2 1638.5,834.4 1640.0,833.4 1641.5,832.5 1643.0,831.4 1644.5,830.4 1646.0,829.3 1647.5,828.2 1649.0,827.1 1650.5,826.0 1652.0,824.9 1652.5,824.6"/>
<polyline stroke="#72f4a2" points="48.5,929.4 50.0,928.0 51.5,926.5 53.0,924.9 54.5,923.3 56.0,921.5 57.5,919.6 59.0,917.6 60.5,915.5 62.0,913.4 63.5,911.3 65.0,909.1 66.5,907.0 68.0,904.7 69.5,902.5 71.0,900.1 72.5,897.7 74.0,895.2 75.5,892.5 77.0,889.7 78.5,887.0 80.0,884.1 81.5,881.4 83.0,878.6 84.5,875.9 86.0,873.2 87.5,870.4 89.0,867.6 90.5,864.8 92.0,861.9 93.5,858.9 95.0,855.9 96.5,852.9 98.0,849.8 99.5,846.7 101.0,843.6 102.5,840.3 104.0,836.9 105.5,833.6 107.0,830.4 108.5,827.3 110.0,824.3 111.5,821.3 113.0,818.0 114.5,814.7 116.0,811.2 117.5,807.7 119.0,804.1 120.5,800.5 122.0,796.9 123.5,793.4 125.0,789.8 126.5,786.3 128.0,782.7 129.5,779.0 131.0,775.4 132.5,771.9 134.0,768.3 135.5,764.9 137.0,761.5 138.5,758.3 140.0,755.2 141.5,752.3 143.0,749.3 144.5,746.3 146.0,743.0 147.5,739.6 149.0,736.1 150.5,732.7 152.0,729.7 153.5,726.9 155.0,724.2 156.5,721.6 158.0,719.1 159.5,716.6 161.0,714.2 162.5,711.9 164.0,709.6 165.5,707.4 167.0,705.2 168.5,703.0 170.0,700.9 171.5,698.7 173.0,696.7 174.5,694.7 176.0,692.7 177.5,690.7 179.0,688.7 180.5,686.7 182.0,684.6 183.5,682.6 185.0,680.5 186.5,678.5 188.0,676.4 189.5,674.3 191.0,672.2 192.5,670.2 194.0,668.0 195.5,665.9 197.0,663.6 198.5,661.4 200.0,659.2 201.5,657.0 203.0,654.9 204.5,652.9 206.0,650.9 207.5,649.1 209.0,647.4 210.5,645.8 212.0,644.2 213.5,642.6 215.0,641.2 216.5,639.7 218.0,638.4 219.5,637.1 221.0,635.8 222.5,634.5 224.0,633.3 225.5,632.2 227.0,631.1 228.5,630.0 230.0,629.1 231.5,628.2 233.0,627.4 234.5,626.7 236.0,626.0 237.5,625.4 239.0,624.9 240.5,624.4 242.0,624.0 243.5,623.6 245.0,623.4 246.5,623.4 248.0,623.4 249.5,623.4 251.0,623.4 252.5,623.4 254.0,623.5 255.5,624.0 257.0,624.7 258.5,625.6 260.0,626.6 261.5,627.5 263.0,628.7 264.5,630.0 266.0,631.5 267.5,633.4 269.0,635.8 270.5,638.6 272.0,641.5 273.5,644.5 275.0,647.6 276.5,651.0 278.0,654.4 279.5,657.9 281.0,661.3 282.5,664.8 284.0,668.4 285.5,672.1 287.0,675.8 288.5,679.5 290.0,683.4 291.5,687.3 293.0,691.2 294.5,695.2 296.0,699.1 297.5,703.0 299.0,706.9 300.5,710.8 302.0,714.7 303.5,718.7 305.0,722.7 306.5,726.7 308.0,730.8 309.5,734.9 311.0,739.0 312.5,743.3 314.0,747.6 315.5,752.2 317.0,756.8 318.5,761.5 320.0,766.2 321.5,770.8 323.0,775.3 324.5,779.6 326.0,783.8 327.5,787.8 329.0,791.8 330.5,795.7 332.0,799.7 333.5,803.6 335.0,807.6 336.5,811.6 338.0,815.7 339.5,819.6 341.0,823.6 342.5,827.5 344.0,831.4 345.5,835.2 347.0,839.0 348.5,842.8 350.0,846.5 351.5,850.2 353.0,853.7 354.5,857.2 356.0,860.7 357.5,864.1 359.0,867.6 360.5,871.0 362.0,874.5 363.5,878.1 365.0,881.7 366.5,885.1 368.0,888.2 369.5,891.2 371.0,894.0 372.5,896.8 374.0,899.4 375.5,902.0 377.0,904.5 378.5,906.9 380.0,909.4 381.5,911.7 383.0,913.9 384.5,916.0 386.0,917.9 387.5,919.6 389.0,921.1 390.5,922.6 392.0,924.0 393.5,925.4 395.0,926.8 396.5,928.2 398.0,929.6 399.5,930.9 401.0,932.2 402.5,933.5 404.0,934.8 405.5,936.0 407.0,937.2 408.5,938.1 410.0,938.7 411.5,939.3 413.0,939.9 414.5,940.2 416.0,940.4 417.5,940.4 419.0,940.4 420.5,940.4 422.0,940.4 423.5,940.4 425.0,940.3 426.5,940.0 428.0,939.5 429.5,938.9 431.0,938.3 432.5,937.6 434.0,936.8 435.5,936.0 437.0,935.0 438.5,933.9 440.0,932.8 441.5,931.6 443.0,930.3 444.5,929.0 446.0,927.5 447.5,926.0 449.0,924.4 450.5,922.7 452.0,920.9 453.5,918.9 455.0,916.9 456.5,914.8 458.0,912.7 459.5,910.6 461.0,908.4 462.5,906.2 464.0,904.0 465.5,901.7 467.0,899.3 468.5,896.9 470.0,894.3 471.5,891.6 473.0,888.8 474.5,886.0 476.0,883.2 477.5,880.5 479.0,877.7 480.5,875.0 482.0,872.2 483.5,869.5 485.0,866.7 486.5,863.8 488.0,860.9 489.5,857.9 491.0,854.9 492.5,851.9 494.0,848.8 495.5,845.7 497.0,842.5 498.5,839.2 500.0,835.8 501.5,832.5 503.0,829.3 504.5,826.3 506.0,823.3 507.5,820.2 509.0,816.9 510.5,813.6 512.0,810.1 513.5,806.5 515.0,802.9 516.5,799.3 518.0,795.7 519.5,792.2 521.0,788.6 522.5,785.1 524.0,781.5 525.5,777.8 527.0,774.2 528.5,770.7 530.0,767.2 531.5,763.8 533.0,760.4 534.5,757.3 536.0,754.3 537.5,751.3 539.0,748.3 540.5,745.2 542.0,741.9 543.5,738.4 545.0,734.9 546.5,731.7 548.0,728.8 549.5,726.0 551.0,723.3 552.5,720.8 554.0,718.3 555.5,715.8 557.0,713.4 558.5,711.1 560.0,708.9 561.5,706.6 563.0,704.4 564.5,702.3 566.0,700.1 567.5,698.0 569.0,696.0 570.5,694.0 572.0,692.0 573.5,690.0 575.0,688.0 576.5,686.0 578.0,684.0 579.5,681.9 581.0,679.8 582.5,677.8 584.0,675.7 585.5,673.6 587.0,671.5 588.5,669.5 590.0,667.3 591.5,665.1 593.0,662.9 594.5,660.7 596.0,658.5 597.5,656.3 599.0,654.2 600.5,652.2 602.0,650.3 603.5,648.5 605.0,646.8 606.5,645.2 608.0,643.6 609.5,642.1 611.0,640.7 612.5,639.3 614.0,637.9 615.5,636.6 617.0,635.4 618.5,634.1 620.0,632.9 621.5,631.8 623.0,630.7 624.5,629.7 626.0,628.8 627.5,628.0 629.0,627.2 630.5,626.4 632.0,625.8 633.5,625.2 635.0,624.7 636.5,624.3 638.0,623.8 639.5,623.5 641.0,623.4 642.5,623.4 644.0,623.4 645.5,623.4 647.0,623.4 648.5,623.4 650.0,623.6 651.5,624.2 653.0,625.0 654.5,626.0 656.0,626.9 657.5,627.9 659.0,629.1 660.5,630.5 662.0,632.1 663.5,634.1 665.0,636.7 666.5,639.5 668.0,642.5 669.5,645.5 671.0,648.7 672.5,652.1 674.0,655.5 675.5,659.0 677.0,662.5 678.5,666.0 680.0,669.6 681.5,673.3 683.0,677.0 684.5,680.8 686.0,684.7 687.5,688.6 689.0,692.5 690.5,696.5 692.0,700.4 693.5,704.3 695.0,708.2 696.5,712.1 698.0,716.0 699.5,720.0 701.0,724.0 702.5,728.0 704.0,732.1 705.5,736.2 707.0,740.4 708.5,744.7 710.0,749.1 711.5,753.7 713.0,758.4 714.5,763.1 716.0,767.7 717.5,772.3 719.0,776.8 720.5,781.0 722.0,785.2 723.5,789.2 725.0,793.1 726.5,797.0 728.0,801.0 729.5,805.0 731.0,809.0 732.5,813.0 734.0,817.0 735.5,821.0 737.0,824.9 738.5,828.8 740.0,832.6 741.5,836.5 743.0,840.3 744.5,844.0 746.0,847.7 747.5,851.4 749.0,854.9 750.5,858.4 752.0,861.8 753.5,865.3 755.0,868.7 756.5,872.2 758.0,875.7 759.5,879.3 761.0,882.8 762.5,886.2 764.0,889.2 765.5,892.1 767.0,895.0 768.5,897.7 770.0,900.3 771.5,902.8 773.0,905.3 774.5,907.7 776.0,910.1 777.5,912.5 779.0,914.6 780.5,916.6 782.0,918.4 783.5,920.1 785.0,921.6 786.5,923.1 788.0,924.5 789.5,925.9 791.0,927.3 792.5,928.7 794.0,930.0 795.5,931.4 797.0,932.7 798.5,933.9 800.0,935.2 801.5,936.4 803.0,937.5 804.5,938.3 806.0,938.9 807.5,939.5 809.0,940.0 810.5,940.3 812.0,940.4 813.5,940.4 815.0,940.4 816.5,940.4 818.0,940.4 819.5,940.4 821.0,940.2 822.5,939.8 824.0,939.3 825.5,938.7 827.0,938.1 828.5,937.4 830.0,936.6 831.5,935.6 833.0,934.6 834.5,933.6 836.0,932.4 837.5,931.2 839.0,929.9 840.5,928.5 842.0,927.0 843.5,925.4 845.0,923.8 846.5,922.1 848.0,920.2 849.5,918.3 851.0,916.2 852.5,914.1 854.0,912.0 855.5,909.8 857.0,907.7 858.5,905.5 860.0,903.2 861.5,900.9 863.0,898.5 864.5,896.0 866.0,893.4 867.5,890.7 869.0,887.9 870.5,885.1 872.0,882.3 873.5,879.5 875.0,876.8 876.5,874.1 878.0,871.3 879.5,868.6 881.0,865.7 882.5,862.8 884.0,859.9 885.5,856.9 887.0,853.9 888.5,850.9 890.0,847.8 891.5,844.6 893.0,841.4 894.5,838.1 896.0,834.7 897.5,831.4 899.0,828.3 900.5,825.3 902.0,822.3 903.5,819.1 905.0,815.8 906.5,812.4 908.0,808.9 909.5,805.3 911.0,801.7 912.5,798.1 914.0,794.5 915.5,791.0 917.0,787.5 918.5,783.9 920.0,780.3 921.5,776.6 923.0,773.0 924.5,769.5 926.0,766.0 927.5,762.6 929.0,759.4 930.5,756.2 932.0,753.3 933.5,750.3 935.0,747.3 936.5,744.1 938.0,740.7 939.5,737.2 941.0,733.8 942.5,730.7 944.0,727.8 945.5,725.1 947.0,722.5 948.5,719.9 950.0,717.4 951.5,715.0 953.0,712.7 954.5,710.4 956.0,708.1 957.5,705.9 959.0,703.7 960.5,701.6 962.0,699.4 963.5,697.4 965.0,695.3 966.5,693.3 968.0,691.4 969.5,689.4 971.0,687.4 972.5,685.3 974.0,683.3 975.5,681.2 977.0,679.2 978.5,677.1 980.0,675.0 981.5,672.9 983.0,670.9 984.5,668.8 986.0,666.6 987.5,664.4 989.0,662.2 990.5,659.9 992.0,657.8 993.5,655.6 995.0,653.5 996.5,651.6 998.0,649.7 999.5,648.0 1001.0,646.3 1002.5,644.7 1004.0,643.1 1005.5,641.6 1007.0,640.2 1008.5,638.8 1010.0,637.5 1011.5,636.2 1013.0,634.9 1014.5,633.7 1016.0,632.5 1017.5,631.4 1019.0,630.4 1020.5,629.4 1022.0,628.5 1023.5,627.7 1025.0,626.9 1026.5,626.2 1028.0,625.6 1029.5,625.1 1031.0,624.6 1032.5,624.1 1034.0,623.7 1035.5,623.5 1037.0,623.4 1038.5,623.4 1040.0,623.4 1041.5,623.4 1043.0,623.4 1044.5,623.4 1046.0,623.8 1047.5,624.5 1049.0,625.3 1050.5,626.3 1052.0,627.2 1053.5,628.3 1055.0,629.5 1056.5,631.0 1058.0,632.7 1059.5,634.9 1061.0,637.6 1062.5,640.5 1064.0,643.5 1065.5,646.6 1067.0,649.8 1068.5,653.2 1070.0,656.7 1071.5,660.2 1073.0,663.7 1074.5,667.2 1076.0,670.8 1077.5,674.5 1079.0,678.3 1080.5,682.1 1082.0,686.0 1083.5,689.9 1085.0,693.9 1086.5,697.8 1088.0,701.7 1089.5,705.6 1091.0,709.5 1092.5,713.4 1094.0,717.3 1095.5,721.3 1097.0,725.4 1098.5,729.4 1100.0,733.5 1101.5,737.6 1103.0,741.9 1104.5,746.2 1106.0,750.6 1107.5,755.2 1109.0,759.9 1110.5,764.6 1112.0,769.3 1113.5,773.8 1115.0,778.2 1116.5,782.4 1118.0,786.5 1119.5,790.5 1121.0,794.4 1122.5,798.4 1124.0,802.3 1125.5,806.3 1127.0,810.3 1128.5,814.3 1130.0,818.3 1131.5,822.3 1133.0,826.2 1134.5,830.1 1136.0,833.9 1137.5,837.8 1139.0,841.5 1140.5,845.3 1142.0,848.9 1143.5,852.6 1145.0,856.1 1146.5,859.6 1148.0,863.0 1149.5,866.4 1151.0,869.9 1152.5,873.3 1154.0,876.9 1155.5,880.5 1157.0,884.0 1158.5,887.2 1160.0,890.2 1161.5,893.1 1163.0,895.9 1164.5,898.5 1166.0,901.1 1167.5,903.6 1169.0,906.1 1170.5,908.6 1172.0,910.9 1173.5,913.2 1175.0,915.3 1176.5,917.3 1178.0,919.0 1179.5,920.6 1181.0,922.1 1182.5,923.5 1184.0,924.9 1185.5,926.3 1187.0,927.7 1188.5,929.1 1190.0,930.5 1191.5,931.8 1193.0,933.1 1194.5,934.3 1196.0,935.6 1197.5,936.8 1199.0,937.8 1200.5,938.5 1202.0,939.1 1203.5,939.7 1205.0,940.1 1206.5,940.4 1208.0,940.4 1209.5,940.4 1211.0,940.4 1212.5,940.4 1214.0,940.4 1215.5,940.4 1217.0,940.1 1218.5,939.7 1220.0,939.1 1221.5,938.5 1223.0,937.8 1224.5,937.1 1226.0,936.3 1227.5,935.3 1229.0,934.3 1230.5,933.2 1232.0,932.0 1233.5,930.8 1235.0,929.4 1236.5,928.0 1238.0,926.5 1239.5,924.9 1241.0,923.3 1242.5,921.5 1244.0,919.6 1245.5,917.6 1247.0,915.5 1248.5,913.4 1250.0,911.3 1251.5,909.1 1253.0,907.0 1254.5,904.7 1256.0,902.5 1257.5,900.1 1259.0,897.7 1260.5,895.2 1262.0,892.5 1263.5,889.7 1265.0,887.0 1266.5,884.1 1268.0,881.4 1269.5,878.6 1271.0,875.9 1272.5,873.2 1274.0,870.4 1275.5,867.6 1277.0,864.8 1278.5,861.9 1280.0,858.9 1281.5,855.9 1283.0,852.9 1284.5,849.8 1286.0,846.7 1287.5,843.6 1289.0,840.3 1290.5,836.9 1292.0,833.6 1293.5,830.4 1295.0,827.3 1296.5,824.3 1298.0,821.3 1299.5,818.0 1301.0,814.7 1302.5,811.2 1304.0,807.7 1305.5,804.1 1307.0,800.5 1308.5,796.9 1310.0,793.4 1311.5,789.8 1313.0,786.3 1314.5,782.7 1316.0,779.0 1317.5,775.4 1319.0,771.9 1320.5,768.3 1322.0,764.9 1323.5,761.5 1325.0,758.3 1326.5,755.2 1328.0,752.3 1329.5,749.3 1331.0,746.3 1332.5,743.0 1334.0,739.6 1335.5,736.1 1337.0,732.7 1338.5,729.7 1340.0,726.9 1341.5,724.2 1343.0,721.6 1344.5,719.1 1346.0,716.6 1347.5,714.2 1349.0,711.9 1350.5,709.6 1352.0,707.4 1353.5,705.2 1355.0,703.0 1356.5,700.9 1358.0,698.7 1359.5,696.7 1361.0,694.7 1362.5,692.7 1364.0,690.7 1365.5,688.7 1367.0,686.7 1368.5,684.6 1370.0,682.6 1371.5,680.5 1373.0,678.5 1374.5,676.4 1376.0,674.3 1377.5,672.2 1379.0,670.2 1380.5,668.0 1382.0,665.9 1383.5,663.6 1385.0,661.4 1386.5,659.2 1388.0,657.0 1389.5,654.9 1391.0,652.9 1392.5,650.9 1394.0,649.1 1395.5,647.4 1397.0,645.8 1398.5,644.2 1400.0,642.6 1401.5,641.2 1403.0,639.7 1404.5,638.4 1406.0,637.1 1407.5,635.8 1409.0,634.5 1410.5,633.3 1412.0,632.2 1413.5,631.1 1415.0,630.0 1416.5,629.1 1418.0,628.2 1419.5,627.4 1421.0,626.7 1422.5,626.0 1424.0,625.4 1425.5,624.9 1427.0,624.4 1428.5,624.0 1430.0,623.6 1431.5,623.4 1433.0,623.4 1434.5,623.4 1436.0,623.4 1437.5,623.4 1439.0,623.4 1440.5,623.5 1442.0,624.0 1443.5,624.7 1445.0,625.6 1446.5,626.6 1448.0,627.5 1449.5,628.7 1451.0,630.0 1452.5,631.5 1454.0,633.4 1455.5,635.8 1457.0,638.6 1458.5,641.5 1460.0,644.5 1461.5,647.6 1463.0,651.0 1464.5,654.4 1466.0,657.9 1467.5,661.3 1469.0,664.8 1470.5,668.4 1472.0,672.1 1473.5,675.8 1475.0,679.5 1476.5,683.4 1478.0,687.3 1479.5,691.2 1481.0,695.2 1482.5,699.1 1484.0,703.0 1485.5,706.9 1487.0,710.8 1488.5,714.7 1490.0,718.7 1491.5,722.7 1493.0,726.7 1494.5,730.8 1496.0,734.9 1497.5,739.0 1499.0,743.3 1500.5,747.6 1502.0,752.2 1503.5,756.8 1505.0,761.5 1506.5,766.2 1508.0,770.8 1509.5,775.3 1511.0,779.6 1512.5,783.8 1514.0,787.8 1515.5,791.8 1517.0,795.7 1518.5,799.7 1520.0,803.6 1521.5,807.6 1523.0,811.6 1524.5,815.7 1526.0,819.6 1527.5,823.6 1529.0,827.5 1530.5,831.4 1532.0,835.2 1533.5,839.0 1535.0,842.8 1536.5,846.5 1538.0,850.2 1539.5,853.7 1541.0,857.2 1542.5,860.7 1544.0,864.1 1545.5,867.6 1547.0,871.0 1548.5,874.5 1550.0,878.1 1551.5,881.7 1553.0,885.1 1554.5,888.2 1556.0,891.2 1557.5,894.0 1559.0,896.8 1560.5,899.4 1562.0,902.0 1563.5,904.5 1565.0,906.9 1566.5,909.4 1568.0,911.7 1569.5,913.9 1571.0,916.0 1572.5,917.9 1574.0,919.6 1575.5,921.1 1577.0,922.6 1578.5,924.0 1580.0,925.4 1581.5,926.8 1583.0,928.2 1584.5,929.6 1586.0,930.9 1587.5,932.2 1589.0,933.5 1590.5,934.8 1592.0,936.0 1593.5,937.2 1595.0,938.1 1596.5,938.7 1598.0,939.3 1599.5,939.9 1601.0,940.2 1602.5,940.4 1604.0,940.4 1605.5,940.4 1607.0,940.4 1608.5,940.4 1610.0,940.4 1611.5,940.3 1613.0,940.0 1614.5,939.5 1616.0,938.9 1617.5,938.3 1619.0,937.6 1620.5,936.8 1622.0,936.0 1623.5,935.0 1625.0,933.9 1626.5,932.8 1628.0,931.6 1629.5,930.3 1631.0,929.0 1632.5,927.5 1634.0,926.0 1635.5,924.4 1637.0,922.7 1638.5,920.9 1640.0,918.9 1641.5,916.9 1643.0,914.8 1644.5,912.7 1646.0,910.6 1647.5,908.4 1649.0,906.2 1650.5,904.0 1652.0,901.7 1652.5,900.9"/>
</g>
<g fill="none" stroke-linejoin="round" stroke-width="1.700" stroke="#72f4a2"><polyline points="489.1,368.9 489.7,371.7 497.1,374.6 514.3,382.0 560.0,400.9 610.0,422.5 625.0,428.7 675.0,448.8 710.0,463.8 735.0,473.0 760.0,480.0 775.0,484.2 785.0,485.8 793.2,486.2"/><polyline points="1327.0,385.5 1327.4,384.6 1337.5,388.8 1385.0,408.8 1435.0,430.0 1485.0,451.2 1535.0,471.2 1560.0,481.2 1585.0,490.0 1610.0,497.0 1622.5,499.2 1631.2,500.0"/></g>
<g fill="none" stroke-linejoin="round" stroke-width="1.450" stroke="#72f4a2"><polyline points="414.9,339.7 415.8,345.4 416.6,340.3 421.1,340.9 422.1,348.3 422.5,328.9 423.4,343.7 427.4,343.7 428.2,354.0 428.6,335.1 429.7,347.1 433.1,348.3 433.9,350.6 434.6,340.9 435.4,347.1 438.9,350.0 439.4,342.0 440.2,350.6 444.0,352.9 444.6,358.6 445.1,352.3 448.0,354.6 448.6,364.3 448.9,350.6 449.7,354.0 453.1,355.7 456.6,358.0 457.1,363.7 457.7,358.6 460.6,358.6 463.4,359.7 464.2,354.0 464.9,360.9 470.9,363.1 471.4,366.6 472.0,363.1 477.1,366.0 477.7,370.6 478.3,366.6 482.3,368.3 482.9,366.0 483.4,368.9 488.6,371.1 489.1,368.9 489.7,371.7"/><polyline points="1245.4,349.1 1246.3,337.7 1247.1,348.6 1252.9,351.4 1253.5,346.3 1254.2,352.0 1259.1,353.7 1259.9,337.7 1260.9,361.7 1262.0,357.1 1265.4,356.0 1266.2,344.0 1266.8,380.3 1267.9,360.6 1271.1,360.6 1271.7,358.3 1272.6,368.6 1273.4,362.9 1281.4,366.3 1282.4,375.4 1283.1,366.3 1286.0,367.4 1286.5,362.3 1286.9,387.7 1288.0,367.4 1290.6,369.7 1291.1,373.1 1291.7,369.7 1298.0,372.6 1298.6,369.7 1301.8,373.1 1302.3,366.3 1302.9,374.3 1305.4,375.4 1306.0,371.4 1306.6,376.6 1309.1,376.3 1315.6,379.5 1316.0,384.9 1316.5,379.8 1318.0,380.5 1318.4,384.3 1318.9,381.0 1326.6,384.3 1327.0,385.5 1327.4,384.6"/></g>
<path fill="#ff1a1a" d="M300.2 150.5 L306.8 163.0 L301.8 163.0 L301.8 213.0 L307.4 213.0 L300.2 224.8 L293.0 213.0 L298.6 213.0 L298.6 163.0 L293.6 163.0 Z"/>
<path fill="#ff1a1a" d="M1139.7 175.8 L1146.5 187.4 L1141.3 187.4 L1141.3 218.6 L1147.1 218.6 L1139.7 230.2 L1132.3 218.6 L1138.1 218.6 L1138.1 187.4 L1132.9 187.4 Z"/>
<text x="325" y="184" font-size="19.3" fill="#ff1a1a" stroke="#ff1a1a" stroke-width=".35" id="r1">Rund 20dB Abstand zur 1. Oberwelle</text>
<text x="1165.5" y="189" font-size="19.3" fill="#ff1a1a" stroke="#ff1a1a" stroke-width=".35" id="r2">Rund 15dB Abstand zur 1. Oberwelle</text>
</svg>
<div class="t" style="left:2px;top:1009.300px;font-size:11.500px;letter-spacing:-.33px">x = 11.371MHz</div>
<div class="t" style="left:86px;top:1009.300px;font-size:11.500px;letter-spacing:-.33px">y = 9.125dB</div>
<div class="a" style="left:0;top:1000px;width:162px;height:2px;background:#000"></div>
<div class="a" style="left:0;top:1002px;width:1680px;height:1px;background:#fff"></div>
<div class="a" style="left:0;top:1003px;width:1680px;height:1px;background:#dcdcdc"></div>
<div class="a" style="left:1632px;top:1005px;width:46px;height:17px;border:1px solid;border-color:#808080 #fff #fff #808080"></div>
<div class="a" style="left:0;top:1023px;width:1680px;height:1px;background:#fff"></div>
<div class="btn" style="left:2px;top:1026px;width:50px;height:22px"></div><svg class="a" style="left:5px;top:1030px" width="13" height="15" viewBox="0 0 13 15" ><path fill="#e8502c" d="M1 3q2-2 5-1l-1 5q-3-1-5 1z"/><path fill="#58b030" d="M7 2.300q2.500 1 5-1l-1 5q-2.500 2-5 1z"/><path fill="#3a70e0" d="M0 9q2-2 5-1l-1 5q-3-1-5 1z"/><path fill="#f0c020" d="M6 8.300q2.500 1 5-1l-1 5q-2.500 2-5 1z"/></svg><div class="t" style="left:22px;top:1031px;font-weight:bold;font-size:12px;letter-spacing:.2px">Start</div><svg class="a" style="left:60px;top:1029px" width="17" height="17" viewBox="0 0 17 17" ><rect x="1" y="1.500" width="14" height="13" rx="3" fill="#2878d8" transform="rotate(-8 8 8)"/><rect x="3" y="3.500" width="10" height="9" rx="2" fill="#e8f4ff" transform="rotate(-8 8 8)"/><path fill="none" stroke="#2060c0" stroke-width="1.500" d="M10.500 5.500q-4-1-4.500 2.500t4 2.500M8 8h3"/></svg><svg class="a" style="left:82px;top:1029px" width="17" height="17" viewBox="0 0 17 17" ><circle cx="8.700" cy="8" r="6.800" fill="#3565c8"/><circle cx="10" cy="6" r="2.500" fill="#6d9cf0"/><path fill="#e8701a" d="M3 3.500Q1 6 1.500 9.500Q3 15.800 9 15.800q5.500-.5 6.600-6.300q.3-2-.5-3.500q-.3 3-2.600 4.800q-2.500 1.500-4.900.2q-2.100-1.400-1.600-4q.5-1.800 2.300-2.200q-1.800-1.200-3.500-.3q-.8-.7-1.800-1z"/><path fill="#f8b030" d="M2.500 8q.5 4.500 4 6.300q-2-2.300-2.200-5.300z"/></svg><svg class="a" style="left:105px;top:1030px" width="16" height="16" viewBox="0 0 16 16" ><path fill="none" stroke="#303030" stroke-width="1.500" d="M5 7V4.500q0-2.500 3-2.500t3 2.500V7"/><rect x="2.500" y="6.500" width="11" height="8" rx="1.500" fill="#f0e020" stroke="#404000"/><path stroke="#a09000" d="M4 11.500h8"/></svg><div class="t" style="left:134px;top:1028px;font-weight:bold;font-size:11px;letter-spacing:-1px">&raquo;</div><div class="btn" style="left:147px;top:1026px;width:159px;height:22px"></div><svg class="a" style="left:150px;top:1029px" width="17" height="17" viewBox="0 0 17 17" ><circle cx="8.700" cy="8" r="6.800" fill="#3565c8"/><circle cx="10" cy="6" r="2.500" fill="#6d9cf0"/><path fill="#e8701a" d="M3 3.500Q1 6 1.500 9.500Q3 15.800 9 15.800q5.500-.5 6.600-6.300q.3-2-.5-3.500q-.3 3-2.600 4.800q-2.500 1.500-4.900.2q-2.100-1.400-1.600-4q.5-1.800 2.300-2.200q-1.800-1.200-3.500-.3q-.8-.7-1.800-1z"/><path fill="#f8b030" d="M2.500 8q.5 4.500 4 6.300q-2-2.300-2.200-5.300z"/></svg><div class="t" style="left:170px;top:1032px;font-size:11px;letter-spacing:-.1px">Ankoppeln an Quarz - Mik...</div><div class="a" style="left:309px;top:1026px;width:160px;height:22px;border:1px solid;border-color:#000 #fff #fff #000;box-shadow:inset 1px 1px 0 #808080;background:#e2e2e2"></div><svg class="a" style="left:314px;top:1030px" width="16" height="16" viewBox="0 0 16 16" ><rect width="16" height="16" fill="#cfcfd4"/><path fill="#900000" d="M5.200 2.400h2.300L4.700 9.400q-.4 1.200.8 1.200h1.900l-.7 2H.6l.8-1.700q1.300-.3 1.800-1.700z"/><path fill="#900000" d="M8.500 2.900H16l-1.200 2.700h-1.600q-1.500 3.400-2.200 7H8.200q1.100-3.800 2.800-7H7.700z"/></svg><div class="t" style="left:334px;top:1033px;font-size:11px;font-weight:bold;letter-spacing:.65px">LTspice IV - Senders...</div><div class="btn" style="left:472px;top:1026px;width:160px;height:22px"></div><svg class="a" style="left:476px;top:1029px" width="16" height="17" viewBox="0 0 16 17" ><path fill="#d8d8e8" stroke="#606070" d="M3.500 6.500h9l-1 9h-7z"/><path stroke="#d03020" stroke-width="1.600" d="M5 7L3 1"/><path stroke="#2060d0" stroke-width="1.600" d="M8 7V.5"/><path stroke="#e0b010" stroke-width="1.600" d="M10.500 7l2-5"/><path stroke="#30a040" stroke-width="1.300" d="M6.500 7L6 3"/></svg><div class="t" style="left:496px;top:1032px;font-size:11px;letter-spacing:-.3px">ECO+Sender.GIF - Paint</div><div class="a" style="left:1443px;top:1029px;width:47px;height:17px;background:linear-gradient(90deg,#98fc30 0,#98fc30 89%,#808080 89%,#b4b4b4 100%);border:1px solid;border-color:#fff #404040 #404040 #fff"></div><div class="a" style="left:1490px;top:1033px;width:4px;height:9px;background:#909090;border:1px solid #404040;border-left:0"></div><div class="t" style="left:1455px;top:1031px;font-size:12px;font-weight:bold">93%</div><svg class="a" style="left:1501px;top:1030px" width="18" height="16" viewBox="0 0 18 16" ><path fill="#000" d="M0 7h3.500v2H0zM3.500 3.500h4.500q3 0 4 2.500h5v1.500h-5v2h5V11h-5q-1 2.500-4 2.500H3.500zM8 2h4v1.500H8zM8 12.500h4V14H8z"/></svg><div class="a" style="left:1527px;top:1026px;width:151px;height:22px;border:1px solid;border-color:#808080 #fff #fff #808080"></div><svg class="a" style="left:1531px;top:1029px" width="16" height="17" viewBox="0 0 16 17" ><path fill="#f0d020" stroke="#605000" d="M7.500 1l6 2v5q0 5-6 8q-6-3-6-8V3z"/><path stroke="#000" stroke-width="1.800" d="M7.500 4.500v5M7.500 11v1.800"/></svg><svg class="a" style="left:1548px;top:1029px" width="17" height="17" viewBox="0 0 17 17" ><rect x="6" y="1" width="8" height="6" fill="#3050a0" stroke="#c8d0e8"/><rect x="1" y="6" width="8" height="6" fill="#3050a0" stroke="#c8d0e8"/><path stroke="#606060" stroke-width="1.500" d="M2 14.500h6M11 9v2"/><path stroke="#e02020" stroke-width="2" d="M9 9.500l6 6M15 9.500l-6 6"/></svg><svg class="a" style="left:1566px;top:1029px" width="17" height="17" viewBox="0 0 17 17" ><circle cx="6" cy="6" r="4.500" fill="#a0a0a0" stroke="#505050" stroke-width="1.500"/><circle cx="10" cy="8" r="4" fill="#c0c0c0" stroke="#606060"/><circle cx="11" cy="11.500" r="3.800" fill="#e02020" stroke="#fff"/><path stroke="#fff" stroke-width="1.500" d="M8.500 9.500l5 4"/></svg><svg class="a" style="left:1584px;top:1029px" width="17" height="17" viewBox="0 0 17 17" ><path fill="#30a030" d="M3 1h6v3h3L6.500 9L1 4h2z" transform="translate(3,0) rotate(25 6 5)"/><rect x="2" y="9" width="12" height="6" fill="#c8c8c8" stroke="#505050" transform="rotate(-12 8 12)"/><path stroke="#404040" d="M5 12.500h6" transform="rotate(-12 8 12)"/></svg><svg class="a" style="left:1602px;top:1029px" width="16" height="17" viewBox="0 0 16 17" ><rect width="16" height="17" fill="#d81828"/><path fill="none" stroke="#fff" stroke-width="1.800" d="M2 10q1-6.500 6-6.500T14 10M8 4v8.500q.3 2 2.700 1.300"/></svg><svg class="a" style="left:1620px;top:1029px" width="17" height="17" viewBox="0 0 17 17" ><path fill="none" stroke="#18c018" stroke-width="2.400" d="M1.500 5.500q7-6 14 0M3.500 8.700q5-4.500 10 0M5.500 11.800q3-2.500 6 0"/><path fill="#18c018" d="M6 12.500h5l-2.500 4z"/></svg><div class="t" style="left:1643px;top:1032px;font-size:11px">19:51</div>
</div></body></html>
